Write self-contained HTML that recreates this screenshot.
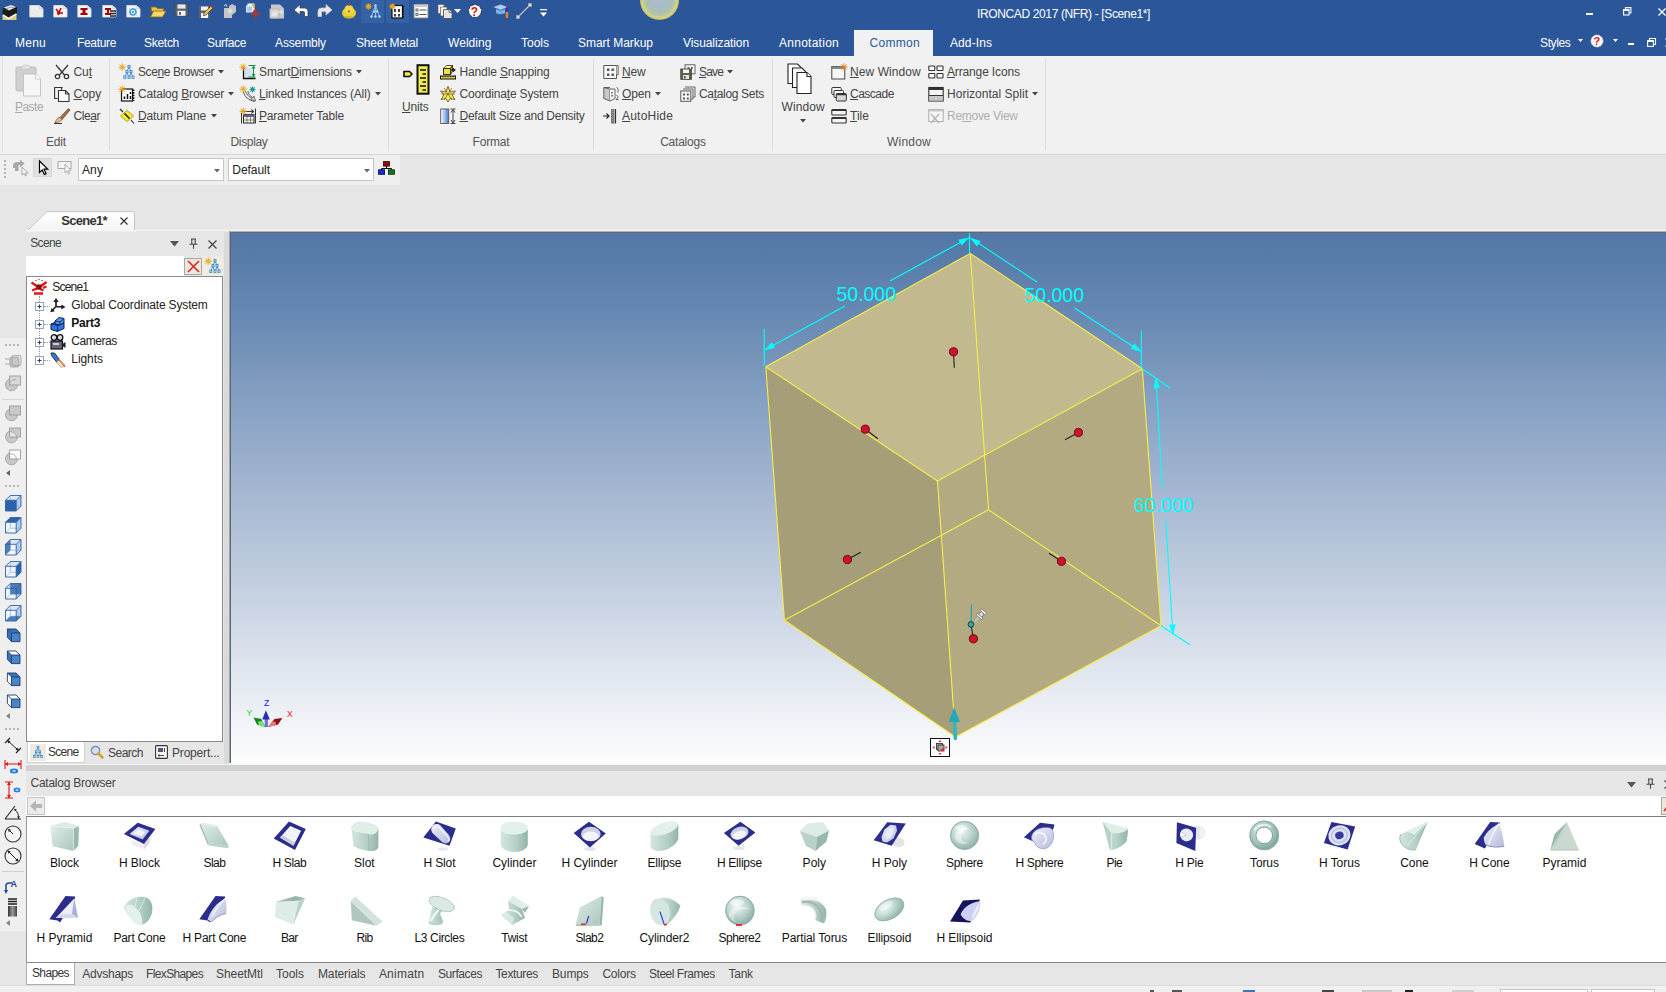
<!DOCTYPE html>
<html lang="en"><head><meta charset="utf-8"><title>IRONCAD 2017 (NFR) - [Scene1*]</title>
<style>
html,body{margin:0;padding:0;}
body{width:1666px;height:992px;overflow:hidden;background:#e6e6e6;font-family:"Liberation Sans",sans-serif;font-size:12px;position:relative;}
.b{position:absolute;display:block;box-sizing:border-box;}
.t{position:absolute;white-space:nowrap;display:block;}
.t u{text-decoration:underline;text-underline-offset:1px;}
svg{overflow:visible;}
</style></head>
<body>
<div class="b" style="left:0px;top:0px;width:1666px;height:56px;background:#2b579a;"></div>
<div class="b" style="left:639.5px;top:-19.5px;width:39.5px;height:39.5px;border-radius:50%;background:radial-gradient(circle closest-side at 50% 50%,#a9bdd9 0%,#a9bdc6 35%,#abc0b0 62%,#bcc8a2 80%,#d4d48c 89%,#d0c860 95%,#beb552 100%);"></div>
<div class="b" style="left:361px;top:0px;width:23px;height:23px;background:#3561a5;"></div>
<div class="b" style="left:385.5px;top:0px;width:23px;height:23px;background:#3561a5;"></div>
<svg class="b" style="left:2px;top:3px;" width="16" height="16" viewBox="0 0 16 16"><rect x="0.500" y="11" width="14" height="6" fill="#d8d078"/><path d="M.5 5.500l9-3 5.500 2v6.500l-8.500 4.500-6-3.500z" fill="#1c1c1c"/><path d="M2 4.500l7-2.500 5 2-7 3.500z" fill="#e8e8e8"/><path d="M4 6l5-2 3 1" stroke="#9a9a9a" stroke-width="1" fill="none"/><path d="M1 12l5.500 3.500 8-4.500" stroke="#f4f4f4" stroke-width="1.600" fill="none"/></svg>
<svg class="b" style="left:29px;top:3px;" width="16" height="16" viewBox="0 0 16 16"><path d="M.8 2.500h9.500l3.700 3.200v8.300h-13.200z" fill="#ececec" stroke="#e4e4e4" stroke-width=".8"/><path d="M10.300 2.500v3.200h3.700z" fill="#fff" stroke="#c4c4c4" stroke-width=".7"/></svg>
<svg class="b" style="left:53px;top:3px;" width="16" height="16" viewBox="0 0 16 16"><path d="M.8 2.500h9.500l3.700 3.200v8.300h-13.200z" fill="#f4f4f4" stroke="#e4e4e4" stroke-width=".8"/><path d="M10.300 2.500v3.200h3.700z" fill="#fff" stroke="#c4c4c4" stroke-width=".7"/><path d="M3 6l4 5M8 5l-3 7M4 10h6" stroke="#c00" stroke-width="1.6" fill="none"/></svg>
<svg class="b" style="left:77px;top:3px;" width="16" height="16" viewBox="0 0 16 16"><path d="M.8 2.500h9.500l3.700 3.200v8.300h-13.200z" fill="#f4f4f4" stroke="#e4e4e4" stroke-width=".8"/><path d="M10.300 2.500v3.200h3.700z" fill="#fff" stroke="#c4c4c4" stroke-width=".7"/><path d="M3.5 5h7v2h-2v3h2v2h-7v-2h2v-3h-2z" fill="#a00"/></svg>
<svg class="b" style="left:101.5px;top:3px;" width="16" height="16" viewBox="0 0 16 16"><path d="M.8 2.500h9.500l3.700 3.200v8.300h-13.200z" fill="#f4f4f4" stroke="#e4e4e4" stroke-width=".8"/><path d="M10.300 2.500v3.200h3.700z" fill="#fff" stroke="#c4c4c4" stroke-width=".7"/><path d="M3 5h6v2h-2v3h2v2h-6v-2h2v-3h-2z" fill="#a00"/><path d="M8 8h6M8 10.5h6M8 13h6" stroke="#222" stroke-width="1.3"/></svg>
<svg class="b" style="left:125.5px;top:3px;" width="16" height="16" viewBox="0 0 16 16"><path d="M.8 2.500h9.500l3.700 3.200v8.300h-13.200z" fill="#f4f4f4" stroke="#e4e4e4" stroke-width=".8"/><path d="M10.300 2.500v3.200h3.700z" fill="#fff" stroke="#c4c4c4" stroke-width=".7"/><circle cx="7" cy="9" r="3" fill="none" stroke="#2a9fd6" stroke-width="1.5"/><circle cx="7" cy="9" r="1" fill="#1a4fb0"/><path d="M3 5l8 8" stroke="#8cf" stroke-width=".8"/></svg>
<svg class="b" style="left:149.5px;top:3px;" width="16" height="16" viewBox="0 0 16 16"><path d="M1 4h5l1.5 1.5h6v3h-12z" fill="#e8c44a" stroke="#8a6a10" stroke-width=".8"/><path d="M0.5 14l3-6h12.5l-3.5 6z" fill="#f4d768" stroke="#8a6a10" stroke-width=".8"/></svg>
<svg class="b" style="left:174px;top:3px;" width="16" height="16" viewBox="0 0 16 16"><rect x="1" y="1" width="13" height="12" fill="#5c6470" stroke="#3c4450" stroke-width=".8"/><rect x="3.500" y="1.400" width="8" height="4.200" fill="#e8e8e8"/><rect x="3.500" y="7.800" width="8" height="5" fill="#f4f4f4"/><rect x="5" y="9" width="2" height="2.800" fill="#5c6470"/></svg>
<svg class="b" style="left:198px;top:3px;" width="16" height="16" viewBox="0 0 16 16"><rect x="1" y="3" width="11" height="12" fill="#5c6470"/><rect x="3" y="3.5" width="7" height="4" fill="#f0f0f0"/><rect x="3" y="10" width="7" height="5" fill="#f8f8f8"/><path d="M6 10l7-7 2 2-7 7-2.6.6z" fill="#f2c44a" stroke="#333" stroke-width=".7"/><path d="M13 3l2 2" stroke="#c33" stroke-width="1.6"/></svg>
<svg class="b" style="left:222px;top:3px;" width="16" height="16" viewBox="0 0 16 16"><path d="M2 5h5v-2l3-2 4 2v6l-4 3v3h-8z" fill="#c4c4c4"/><path d="M5 8l3-3 3 3-3 3z" fill="#dcdcdc"/><path d="M2 3l2-1.5 1 2" stroke="#ddd" fill="none"/></svg>
<svg class="b" style="left:246px;top:3px;" width="16" height="16" viewBox="0 0 16 16"><rect x="2" y="1" width="6" height="6" fill="#e8e8f8" stroke="#fff" stroke-width="1"/><rect x="0.5" y="3" width="6" height="6" fill="#a8c8e8" stroke="#e8f0ff" stroke-width="1"/><path d="M6 2h2v3" stroke="#e8a020" stroke-width="1.4" fill="none"/><path d="M9.5 6v9M5 10.500h9" stroke="#c8301c" stroke-width="1.8"/></svg>
<svg class="b" style="left:269px;top:3px;" width="16" height="16" viewBox="0 0 16 16"><path d="M2 1.500h9l4 4v10h-13z" fill="#c8c8c8"/><rect x="1" y="6" width="9" height="9" fill="#d8d8d8" stroke="#b4b4b4"/><rect x="3" y="9" width="5" height="4" fill="#e4e4e4"/><path d="M9 9h4l-1-2M13 9l-1 2" stroke="#e8e8e8" fill="none" stroke-width="1.2"/></svg>
<svg class="b" style="left:293px;top:3px;" width="16" height="16" viewBox="0 0 16 16"><path d="M1 7l6-5.500v3.500h4.500a3.500 3.500 0 0 1 3.500 3.500v5h-3.500v-4a1 1 0 0 0-1-1h-3.500v3.500z" fill="#fafafa" stroke="#444" stroke-width=".8"/></svg>
<svg class="b" style="left:317px;top:3px;" width="16" height="16" viewBox="0 0 16 16"><path d="M15 7l-6-5.500v3.500h-4.500a3.500 3.500 0 0 0-3.500 3.500v5h3.500v-4a1 1 0 0 1 1-1h3.500v3.500z" fill="#e8e8e8" stroke="#c8c8c8" stroke-width=".8"/></svg>
<svg class="b" style="left:341px;top:3px;" width="16" height="16" viewBox="0 0 16 16"><ellipse cx="8" cy="10" rx="7" ry="5.500" fill="#e8cf30"/><circle cx="8" cy="6.500" r="4.500" fill="#f0da48"/><circle cx="8" cy="1.800" r="1.200" fill="#d03030"/><circle cx="8" cy="8.500" r=".9" fill="#a03060"/><path d="M3 14h10" stroke="#b89c20" stroke-width="1"/></svg>
<svg class="b" style="left:365px;top:3px;" width="16" height="16" viewBox="0 0 16 16"><g stroke="#e8a818" stroke-width="1.300"><path d="M3.500 0.500v6M0.500 3.500h6M1.400 1.400l4.200 4.200M5.600 1.400l-4.200 4.200"/></g><g fill="none" stroke="#9cc4ec" stroke-width=".9"><path d="M10.500 2.500l-4 11M10.500 2.500l4 11M10.500 2.500v11"/><circle cx="10.500" cy="2.500" r="1" fill="#cfe4f8"/><circle cx="9" cy="8.500" r="1" fill="#cfe4f8"/><circle cx="12" cy="8.500" r="1" fill="#cfe4f8"/><circle cx="6.500" cy="13.500" r="1" fill="#cfe4f8"/><circle cx="10.500" cy="13.500" r="1" fill="#cfe4f8"/><circle cx="14.500" cy="13.500" r="1" fill="#cfe4f8"/></g></svg>
<svg class="b" style="left:389px;top:3px;" width="16" height="16" viewBox="0 0 16 16"><rect x="3" y="2.500" width="10.500" height="12.500" fill="#f4f4f4" stroke="#111" stroke-width="1.200"/><path d="M14.200 3v12" stroke="#111" stroke-width="1.600" stroke-dasharray="1.500 1"/><path d="M6 6v3M10 6v3M6 11v2.500M10 11v2.500" stroke="#111" stroke-width="1.600"/><g stroke="#e8a818" stroke-width="1.300"><path d="M3.500 0.500v6M0.500 3.500h6M1.400 1.400l4.200 4.200M5.600 1.400l-4.200 4.200"/></g></svg>
<svg class="b" style="left:413px;top:3px;" width="16" height="16" viewBox="0 0 16 16"><rect x="1" y="1.500" width="14" height="13.500" fill="#fafafa" stroke="#888" stroke-width="1"/><rect x="1" y="1.500" width="14" height="2.500" fill="#ccc"/><rect x="3" y="6" width="2" height="2" fill="none" stroke="#555" stroke-width=".8"/><rect x="3" y="10.500" width="2" height="2" fill="none" stroke="#555" stroke-width=".8"/><path d="M6.500 7h7M6.500 11.500h7" stroke="#555" stroke-width="1"/></svg>
<svg class="b" style="left:437px;top:3px;" width="16" height="16" viewBox="0 0 16 16"><path d="M1 1.500h6v9h-6z" fill="#fafafa" stroke="#666" stroke-width=".8"/><path d="M3.500 4h6.500v9h-6.500z" fill="#fafafa" stroke="#666" stroke-width=".8"/><path d="M6.500 6.500h5.500l3 3v6h-8.500z" fill="#e4e4e4" stroke="#555" stroke-width=".9"/><path d="M12 6.500v3h3" fill="#fff" stroke="#555" stroke-width=".8"/></svg>
<svg class="b" style="left:468px;top:3px;" width="16" height="16" viewBox="0 0 16 16"><circle cx="7" cy="8" r="6.300" fill="#fff" stroke="#222" stroke-width=".8" stroke-dasharray="3 1.200"/><circle cx="7" cy="8" r="5.500" fill="#fff"/></svg>
<svg class="b" style="left:492.5px;top:3px;" width="16" height="16" viewBox="0 0 16 16"><path d="M0.500 4l7-2.500 7 2.500-7 3z" fill="#a8ccf0"/><path d="M3 6v4c2 1.500 7 1.500 9 0v-4l-4.500 1.800z" fill="#7ab0e8"/><rect x="13" y="5" width="1.800" height="4" fill="#1838d8"/><rect x="12.800" y="9" width="2.300" height="6" fill="#f08020"/><circle cx="13.900" cy="4.500" r="1" fill="#c02020"/></svg>
<svg class="b" style="left:516px;top:3px;" width="16" height="16" viewBox="0 0 16 16"><path d="M2 14l12-12" stroke="#c8c8c8" stroke-width="1.100"/><rect x="0.500" y="12.500" width="3" height="3" fill="#ddd" stroke="#aaa" stroke-width=".6"/><rect x="12.500" y="0.500" width="3" height="3" fill="#ddd" stroke="#aaa" stroke-width=".6"/></svg>
<span class="t" style="left:470.8px;top:4.5px;height:14px;line-height:14px;font-size:12px;letter-spacing:0.000px;color:#e01010;font-weight:bold;">?</span>
<svg class="b" style="left:454px;top:9px;" width="8" height="5" viewBox="0 0 8 5"><path d="M0 0h7l-3.500 4z" fill="#fff"/></svg>
<svg class="b" style="left:540px;top:8.5px;" width="8" height="10" viewBox="0 0 8 10"><path d="M0 0h7v1.300h-7z M0 3.500h7l-3.500 4z" fill="#fff"/></svg>
<span class="t" style="left:977.0px;top:5.5px;height:16px;line-height:16px;font-size:12px;letter-spacing:-0.368px;color:#fff;">IRONCAD 2017 (NFR) - [Scene1*]</span>
<div class="b" style="left:1586px;top:13px;width:7px;height:2px;background:#fff;"></div>
<svg class="b" style="left:1623px;top:7px;" width="9" height="9" viewBox="0 0 9 9"><path d="M2.500 2.300v-1.700h5.400v5.400h-1.700" fill="none" stroke="#fff" stroke-width="1.100"/><rect x="0.600" y="2.600" width="5.400" height="5.400" fill="none" stroke="#fff" stroke-width="1.100"/><path d="M0.600 3.300h5.400" stroke="#fff" stroke-width="1.300"/></svg>
<svg class="b" style="left:1658px;top:8px;" width="8" height="8" viewBox="0 0 8 8"><path d="M0.500 0.500l7 7M7.500 0.500l-7 7" stroke="#fff" stroke-width="1.300"/></svg>
<span class="t" style="left:15.0px;top:35.0px;height:16px;line-height:16px;font-size:12px;letter-spacing:0.246px;color:#fff;">Menu</span>
<span class="t" style="left:77.0px;top:35.0px;height:16px;line-height:16px;font-size:12px;letter-spacing:-0.335px;color:#fff;">Feature</span>
<span class="t" style="left:144.0px;top:35.0px;height:16px;line-height:16px;font-size:12px;letter-spacing:-0.279px;color:#fff;">Sketch</span>
<span class="t" style="left:207.0px;top:35.0px;height:16px;line-height:16px;font-size:12px;letter-spacing:-0.335px;color:#fff;">Surface</span>
<span class="t" style="left:275.0px;top:35.0px;height:16px;line-height:16px;font-size:12px;letter-spacing:-0.127px;color:#fff;">Assembly</span>
<span class="t" style="left:356.0px;top:35.0px;height:16px;line-height:16px;font-size:12px;letter-spacing:-0.183px;color:#fff;">Sheet Metal</span>
<span class="t" style="left:448.0px;top:35.0px;height:16px;line-height:16px;font-size:12px;letter-spacing:0.051px;color:#fff;">Welding</span>
<span class="t" style="left:521.0px;top:35.0px;height:16px;line-height:16px;font-size:12px;letter-spacing:-0.003px;color:#fff;">Tools</span>
<span class="t" style="left:578.0px;top:35.0px;height:16px;line-height:16px;font-size:12px;letter-spacing:-0.029px;color:#fff;">Smart Markup</span>
<span class="t" style="left:683.0px;top:35.0px;height:16px;line-height:16px;font-size:12px;letter-spacing:-0.089px;color:#fff;">Visualization</span>
<span class="t" style="left:779.0px;top:35.0px;height:16px;line-height:16px;font-size:12px;letter-spacing:0.264px;color:#fff;">Annotation</span>
<span class="t" style="left:950.0px;top:35.0px;height:16px;line-height:16px;font-size:12px;letter-spacing:0.094px;color:#fff;">Add-Ins</span>
<div class="b" style="left:854px;top:30px;width:79px;height:27px;background:#f1f1f1;"></div>
<span class="t" style="left:869.5px;top:35.0px;height:16px;line-height:16px;font-size:12px;letter-spacing:0.302px;color:#2b579a;">Common</span>
<span class="t" style="left:1540.0px;top:35.0px;height:16px;line-height:16px;font-size:12px;letter-spacing:-0.362px;color:#fff;">Styles</span>
<svg class="b" style="left:1578px;top:39px;" width="6" height="4" viewBox="0 0 6 4"><path d="M0 0h5l-2.500 3z" fill="#fff"/></svg>
<svg class="b" style="left:1590px;top:34px;" width="14" height="14" viewBox="0 0 14 14"><circle cx="7" cy="7" r="6" fill="#fff" stroke="#ddd" stroke-width=".8" stroke-dasharray="2.500 1"/></svg>
<span class="t" style="left:1593.6px;top:35.0px;height:12px;line-height:12px;font-size:11px;letter-spacing:0.000px;color:#e01010;font-weight:bold;">?</span>
<svg class="b" style="left:1613px;top:39px;" width="6" height="4" viewBox="0 0 6 4"><path d="M0 0h5l-2.500 3z" fill="#fff"/></svg>
<div class="b" style="left:1628px;top:43px;width:6px;height:2px;background:#fff;"></div>
<svg class="b" style="left:1647px;top:37.5px;" width="9" height="9" viewBox="0 0 9 9"><path d="M2.500 2.500v-2h6v6h-2" fill="none" stroke="#fff" stroke-width="1.100"/><rect x="0.600" y="2.600" width="5.800" height="5.800" fill="none" stroke="#fff" stroke-width="1.100"/><path d="M0.600 3.300h5.800" stroke="#fff" stroke-width="1.300"/></svg>
<svg class="b" style="left:1664.5px;top:38px;" width="9" height="9" viewBox="0 0 9 9"><path d="M0.500 0.500l8 8M8.500 0.500l-8 8" stroke="#fff" stroke-width="1.200"/></svg>
<div class="b" style="left:0px;top:56px;width:1666px;height:98px;background:#f1f1f1;"></div>
<div class="b" style="left:0px;top:154px;width:1666px;height:1px;background:#d6d6d6;"></div>
<div class="b" style="left:109px;top:59px;width:1px;height:92px;background:#dcdcdc;"></div>
<div class="b" style="left:388px;top:59px;width:1px;height:92px;background:#dcdcdc;"></div>
<div class="b" style="left:593px;top:59px;width:1px;height:92px;background:#dcdcdc;"></div>
<div class="b" style="left:772px;top:59px;width:1px;height:92px;background:#dcdcdc;"></div>
<div class="b" style="left:1045px;top:59px;width:1px;height:92px;background:#dcdcdc;"></div>
<div class="b" style="left:2px;top:56px;width:1px;height:96px;background:#e2e2e2;"></div>
<svg class="b" style="left:15px;top:64px;" width="28" height="34" viewBox="0 0 28 34"><rect x="1" y="3" width="20" height="24" rx="1.500" fill="#d0d0d0" stroke="#bcbcbc"/><path d="M7 3.500c0-3 8-3 8 0l1.500 1.500h-11z" fill="#e8e8e8" stroke="#c4c4c4" stroke-width=".8"/><path d="M8.500 10h12l5 5v17h-17z" fill="#f6f6f6" stroke="#c2c2c2" stroke-width="1"/><path d="M20.500 10v5h5" fill="#fff" stroke="#c2c2c2" stroke-width=".8"/></svg>
<span class="t" style="left:15.0px;top:99.0px;height:16px;line-height:16px;font-size:12px;letter-spacing:-0.534px;color:#a8a8a8;"><u>P</u>aste</span>
<svg class="b" style="left:54px;top:64px;" width="16" height="16" viewBox="0 0 16 16"><path d="M2 1l8.500 10M14 1l-8.500 10" stroke="#333" stroke-width="1.200"/><circle cx="3.500" cy="12.500" r="2.200" fill="none" stroke="#333" stroke-width="1.200"/><circle cx="12.500" cy="12.500" r="2.200" fill="none" stroke="#333" stroke-width="1.200"/></svg>
<span class="t" style="left:73.5px;top:64.0px;height:16px;line-height:16px;font-size:12px;letter-spacing:-0.057px;color:#444;">Cu<u>t</u></span>
<svg class="b" style="left:54px;top:86px;" width="16" height="16" viewBox="0 0 16 16"><path d="M.600 1.500h6l2 0v0M.600 1.500v11h3" fill="none" stroke="#333" stroke-width="1.100"/><path d="M.600 1.500h7v3" fill="none" stroke="#333" stroke-width="1.100"/><path d="M4.500 4.500h7l3.500 3.500v7.500h-10.500z" fill="#fafafa" stroke="#333" stroke-width="1.100"/><path d="M11.500 4.500v3.500h3.500" fill="none" stroke="#333" stroke-width="1"/></svg>
<span class="t" style="left:73.5px;top:86.0px;height:16px;line-height:16px;font-size:12px;letter-spacing:-0.129px;color:#444;"><u>C</u>opy</span>
<svg class="b" style="left:54px;top:108px;" width="16" height="16" viewBox="0 0 16 16"><path d="M14.500 .5l-8.500 9 2 2 8-9.500z" fill="#b07040" stroke="#333" stroke-width=".7"/><path d="M6 9.500c-2 0-3.500 2-5 5 3 0 6-1 7-3z" fill="#e8c080" stroke="#844" stroke-width=".7"/><path d="M0 15.500h8" stroke="#333" stroke-width="1"/></svg>
<span class="t" style="left:73.5px;top:108.0px;height:16px;line-height:16px;font-size:12px;letter-spacing:-0.438px;color:#444;">Cle<u>a</u>r</span>
<span class="t" style="left:46.0px;top:133.5px;height:16px;line-height:16px;font-size:12px;letter-spacing:-0.168px;color:#555;">Edit</span>
<svg class="b" style="left:119px;top:64px;" width="16" height="16" viewBox="0 0 16 16"><g stroke="#eaa210" stroke-width="1"><path d="M3.200 -.5v7.400M-.5 3.200h7.400M.6 .6l5.200 5.200M5.800 .6l-5.200 5.200"/></g><g fill="#eaf3fc" stroke="#3f86cc" stroke-width=".9"><path d="M10 3.500l-1.800 3M10 3.500l1.800 3M8 8.500l-2.200 4M8 8.500l1.500 4M12 8.500l1.800 4M12 8.500l-1.500 4" fill="none"/><rect x="9" y="1.500" width="2" height="2.200"/><rect x="7" y="6.500" width="2" height="2.200"/><rect x="11" y="6.500" width="2" height="2.200"/><rect x="4.800" y="12" width="2" height="2.400"/><rect x="9" y="12" width="2" height="2.400"/><rect x="13" y="12" width="2" height="2.400"/></g></svg>
<span class="t" style="left:138.0px;top:64.0px;height:16px;line-height:16px;font-size:12px;letter-spacing:-0.412px;color:#444;">Sce<u>n</u>e Browser</span>
<svg class="b" style="left:218px;top:70px;" width="6" height="4" viewBox="0 0 6 4"><path d="M0 0h6l-3 3.500z" fill="#444"/></svg>
<svg class="b" style="left:119px;top:86px;" width="16" height="16" viewBox="0 0 16 16"><rect x="2.500" y="3" width="11" height="12" fill="#fafafa" stroke="#111" stroke-width="1.200"/><path d="M14.500 3.500v11.500" stroke="#111" stroke-width="1.800" stroke-dasharray="1.600 1"/><path d="M5.500 10.500v2.500M8.500 8v5M11.500 6v2M11.500 10v3" stroke="#111" stroke-width="1.500"/><g stroke="#eaa210" stroke-width="1"><path d="M3.200 -.5v7.400M-.5 3.200h7.400M.6 .6l5.200 5.200M5.800 .6l-5.200 5.200"/></g></svg>
<span class="t" style="left:138.0px;top:86.0px;height:16px;line-height:16px;font-size:12px;letter-spacing:-0.180px;color:#444;">Catalog <u>B</u>rowser</span>
<svg class="b" style="left:228px;top:92px;" width="6" height="4" viewBox="0 0 6 4"><path d="M0 0h6l-3 3.500z" fill="#444"/></svg>
<svg class="b" style="left:119px;top:108px;" width="16" height="16" viewBox="0 0 16 16"><path d="M8 2.500l6.500 5.500-6.500 5.500-6.500-5.500z" fill="#f4e838" stroke="#b8a800" stroke-width="1"/><path d="M1 1l3 3M12 12l3 3.500" stroke="#222" stroke-width="1.100"/><path d="M5.500 5.500l5 5" stroke="#222" stroke-width="1.600"/></svg>
<span class="t" style="left:138.0px;top:108.0px;height:16px;line-height:16px;font-size:12px;letter-spacing:-0.124px;color:#444;"><u>D</u>atum Plane</span>
<svg class="b" style="left:210.5px;top:114px;" width="6" height="4" viewBox="0 0 6 4"><path d="M0 0h6l-3 3.500z" fill="#444"/></svg>
<svg class="b" style="left:240px;top:64px;" width="16" height="16" viewBox="0 0 16 16"><rect x="3.500" y="4" width="8" height="9.500" fill="#d4e0f8"/><path d="M3.500 3v11.500h12" fill="none" stroke="#111" stroke-width="1.300"/><path d="M13.500 2.500v10M8.500 1.500h7M8.500 13h7" stroke="#109040" stroke-width="1"/><path d="M13.500 1.500l-2 3h4zM13.500 13l-2-3h4z" fill="#109040"/><g stroke="#eaa210" stroke-width="1"><path d="M3.200 -.5v7.400M-.5 3.200h7.400M.6 .6l5.200 5.200M5.800 .6l-5.200 5.200"/></g></svg>
<span class="t" style="left:259.0px;top:64.0px;height:16px;line-height:16px;font-size:12px;letter-spacing:-0.114px;color:#444;">Smart<u>D</u>imensions</span>
<svg class="b" style="left:356px;top:70px;" width="6" height="4" viewBox="0 0 6 4"><path d="M0 0h6l-3 3.500z" fill="#444"/></svg>
<svg class="b" style="left:240px;top:86px;" width="16" height="16" viewBox="0 0 16 16"><g stroke="#eaa210" stroke-width="1"><path d="M3.200 -.5v7.400M-.5 3.200h7.400M.6 .6l5.200 5.200M5.800 .6l-5.200 5.200"/></g><path d="M3.500 6c1 5 5 8 11 9.500M5.500 5c1 4 5 7.500 10 9M8 5c0 3 3 6 6 7" fill="none" stroke="#555" stroke-width="1"/><path d="M14 10l1.500 5-5-1z" fill="#ccc" stroke="#555" stroke-width=".7"/><g stroke="#10a090" stroke-width="1.100"><path d="M12.500 .5v6M9.500 3.500h6M10.400 1.400l4.200 4.200M14.600 1.400l-4.200 4.200"/></g></svg>
<span class="t" style="left:259.0px;top:86.0px;height:16px;line-height:16px;font-size:12px;letter-spacing:-0.146px;color:#444;"><u>L</u>inked Instances (All)</span>
<svg class="b" style="left:375px;top:92px;" width="6" height="4" viewBox="0 0 6 4"><path d="M0 0h6l-3 3.500z" fill="#444"/></svg>
<svg class="b" style="left:240px;top:108px;" width="16" height="16" viewBox="0 0 16 16"><path d="M1.500 5v10.500M15.500 .5v15M1.500 3.500h12M11 1.500l3 2-3 2" fill="none" stroke="#222" stroke-width=".9"/><rect x="3.500" y="6.500" width="10.500" height="8.500" fill="#fff" stroke="#222" stroke-width="1"/><rect x="3.500" y="6.500" width="10.500" height="2.500" fill="#668"/><path d="M3.500 12h10.500M7 9v6M10.500 9v6" stroke="#664" stroke-width=".8"/><g stroke="#eaa210" stroke-width="1"><path d="M3.200 -.5v7.400M-.5 3.200h7.400M.6 .6l5.200 5.200M5.800 .6l-5.200 5.200"/></g></svg>
<span class="t" style="left:259.0px;top:108.0px;height:16px;line-height:16px;font-size:12px;letter-spacing:-0.188px;color:#444;"><u>P</u>arameter Table</span>
<span class="t" style="left:230.5px;top:133.5px;height:16px;line-height:16px;font-size:12px;letter-spacing:-0.337px;color:#555;">Display</span>
<svg class="b" style="left:403.4px;top:64px;" width="28" height="31" viewBox="0 0 28 31"><path d="M1 7.500h5.500l2.500 2.500-2.500 2.500h-5.500z" fill="#f0ec50" stroke="#111" stroke-width="1.600"/><rect x="14.500" y="1.200" width="11" height="28.500" fill="#f0ec50" stroke="#111" stroke-width="2"/><path d="M17 6h6M19.500 10h3.500M17 14h6M19.500 18h3.500M17 22h6M19.500 26h3.500" stroke="#111" stroke-width="1.500"/></svg>
<span class="t" style="left:402.0px;top:99.0px;height:16px;line-height:16px;font-size:12px;letter-spacing:-0.169px;color:#444;"><u>U</u>nits</span>
<svg class="b" style="left:440px;top:64px;" width="16" height="16" viewBox="0 0 16 16"><path d="M3.500 4.500l3-3h6l-2 3z" fill="#fff8a0" stroke="#222" stroke-width=".8"/><rect x="3.500" y="4.500" width="7" height="6" fill="#f0e040" stroke="#222" stroke-width=".9"/><path d="M10.500 4.500l2-3v6l-2 3z" fill="#b8a820" stroke="#222" stroke-width=".8"/><path d="M11 6h3M13 4.500l2 1.500-2 1.500" fill="none" stroke="#111" stroke-width="1.100"/><rect x=".5" y="12" width="15" height="3" fill="#f0e040" stroke="#111" stroke-width="1"/><path d="M3 12v1.500M5.500 12v1.500M8 12v1.500M10.500 12v1.500M13 12v1.500" stroke="#111" stroke-width=".7"/></svg>
<span class="t" style="left:459.5px;top:64.0px;height:16px;line-height:16px;font-size:12px;letter-spacing:-0.138px;color:#444;">Handle <u>S</u>napping</span>
<svg class="b" style="left:440px;top:86px;" width="16" height="16" viewBox="0 0 16 16"><path d="M8 .5l2.200 5.500 5.300-1-3.500 3.800 3 4.700-5-1-2 3.500-2-3.500-5 1 3-4.700-3.500-3.800 5.300 1z" fill="#f8e860" stroke="#6a5a20" stroke-width=".9"/><path d="M4 2l8 12M12 2l-8 12M1 8h14" stroke="#6a5a20" stroke-width=".7" fill="none"/></svg>
<span class="t" style="left:459.5px;top:86.0px;height:16px;line-height:16px;font-size:12px;letter-spacing:-0.178px;color:#444;">Coordina<u>t</u>e System</span>
<svg class="b" style="left:440px;top:108px;" width="16" height="16" viewBox="0 0 16 16"><defs><linearGradient id="dsg" x1="0" x2="1"><stop offset="0" stop-color="#fff"/><stop offset="1" stop-color="#4878d0"/></linearGradient></defs><rect x=".7" y="1" width="8" height="14.500" fill="url(#dsg)" stroke="#555" stroke-width=".9"/><path d="M13 2v12.500M10.500 1h5M10.500 15.500h5M13 1.500l-2 3M13 1.500l2 3M13 15l-2-3M13 15l2-3" fill="none" stroke="#333" stroke-width=".9"/></svg>
<span class="t" style="left:459.5px;top:108.0px;height:16px;line-height:16px;font-size:12px;letter-spacing:-0.266px;color:#444;"><u>D</u>efault Size and Density</span>
<span class="t" style="left:472.5px;top:133.5px;height:16px;line-height:16px;font-size:12px;letter-spacing:-0.167px;color:#555;">Format</span>
<svg class="b" style="left:603px;top:64px;" width="16" height="16" viewBox="0 0 16 16"><path d="M.8 1.500h12.700v13h-12.700z" fill="#fafafa" stroke="#555" stroke-width="1"/><path d="M13.500 1.500h1.700v9h-1.700" fill="#ddd" stroke="#555" stroke-width=".8"/><path d="M4 4.500h2.400v2.400h-2.400zM8.500 4.500h2.400v2.400h-2.400zM4 9.500h2.400v2.400h-2.400zM8.500 9.500h2.400v2.400h-2.400z" fill="#555"/></svg>
<span class="t" style="left:622.0px;top:64.0px;height:16px;line-height:16px;font-size:12px;letter-spacing:-0.172px;color:#444;"><u>N</u>ew</span>
<svg class="b" style="left:603px;top:86px;" width="16" height="16" viewBox="0 0 16 16"><path d="M.8 1.500l6 1.500v12l-6-2.500z" fill="#c8c8c8" stroke="#555" stroke-width=".9"/><path d="M6.800 3h5.200v9.500l-5.200 2.500" fill="#f4f4f4" stroke="#555" stroke-width=".9"/><path d="M1 1.500h6" stroke="#555" stroke-width=".9"/><path d="M9 6v1.500M9 9v1.500" stroke="#444" stroke-width="1.300"/><path d="M13.500 9.500c1.500 0 2 1.500 1 2.500l-1.500 1.500h2.500" fill="none" stroke="#555" stroke-width=".9"/><path d="M13.500 1.500l1.500 1v4" fill="none" stroke="#555" stroke-width=".8"/></svg>
<span class="t" style="left:622.0px;top:86.0px;height:16px;line-height:16px;font-size:12px;letter-spacing:-0.161px;color:#444;"><u>O</u>pen</span>
<svg class="b" style="left:655px;top:92px;" width="6" height="4" viewBox="0 0 6 4"><path d="M0 0h6l-3 3.500z" fill="#444"/></svg>
<svg class="b" style="left:603px;top:108px;" width="16" height="16" viewBox="0 0 16 16"><path d="M0 8h5.500M3.500 5.500l2.500 2.500-2.500 2.500" fill="none" stroke="#222" stroke-width="1.100"/><rect x="8" y="1" width="3.400" height="14.500" fill="#777"/><path d="M12.500 1v14.500" stroke="#333" stroke-width="1.200"/><path d="M9.700 2v12" stroke="#bbb" stroke-width=".8" stroke-dasharray="1 1"/></svg>
<span class="t" style="left:622.0px;top:108.0px;height:16px;line-height:16px;font-size:12px;letter-spacing:0.205px;color:#444;"><u>A</u>utoHide</span>
<svg class="b" style="left:680px;top:64px;" width="16" height="16" viewBox="0 0 16 16"><rect x="5" y=".8" width="10" height="9" fill="#f4f4f4" stroke="#555" stroke-width=".9"/><path d="M7.500 3h1.800v1.800h-1.800zM11 3h1.800v1.800h-1.800z" fill="#555"/><rect x=".8" y="5" width="10.500" height="10.300" fill="#5c6444" stroke="#333" stroke-width=".8"/><rect x="3" y="5.500" width="6" height="3.500" fill="#f4f4f4"/><rect x="3" y="11" width="6" height="4" fill="#e0e0e0"/><rect x="4" y="12" width="1.500" height="2.500" fill="#444"/></svg>
<span class="t" style="left:699.0px;top:64.0px;height:16px;line-height:16px;font-size:12px;letter-spacing:-0.836px;color:#444;"><u>S</u>ave</span>
<svg class="b" style="left:727px;top:70px;" width="6" height="4" viewBox="0 0 6 4"><path d="M0 0h6l-3 3.500z" fill="#444"/></svg>
<svg class="b" style="left:680px;top:86px;" width="16" height="16" viewBox="0 0 16 16"><path d="M5 1h10v10h-2" fill="#eee" stroke="#555" stroke-width=".9"/><path d="M3 3h10v10h-2" fill="#eee" stroke="#555" stroke-width=".9"/><rect x=".8" y="5" width="10" height="10.300" fill="#fafafa" stroke="#555" stroke-width="1"/><path d="M3 7.500h2v2h-2zM6.800 7.500h2v2h-2zM3 11.500h2v2h-2zM6.800 11.500h2v2h-2z" fill="#555"/></svg>
<span class="t" style="left:699.0px;top:86.0px;height:16px;line-height:16px;font-size:12px;letter-spacing:-0.324px;color:#444;">Ca<u>t</u>alog Sets</span>
<span class="t" style="left:660.2px;top:133.5px;height:16px;line-height:16px;font-size:12px;letter-spacing:-0.232px;color:#555;">Catalogs</span>
<svg class="b" style="left:787px;top:63px;" width="29" height="32" viewBox="0 0 29 32"><g fill="#fff" stroke="#222" stroke-width="1.100"><path d="M1 1h9.500l3.500 3.500v16h-13z"/><path d="M5.500 5h9.500l3.500 3.500v16h-13z"/><path d="M10 9.500h10l4 4v17h-14z"/><path d="M20 9.500v4h4" /></g></svg>
<span class="t" style="left:781.5px;top:99.0px;height:16px;line-height:16px;font-size:12px;letter-spacing:0.085px;color:#444;">Window</span>
<svg class="b" style="left:799.5px;top:119px;" width="6" height="4" viewBox="0 0 6 4"><path d="M0 0h6l-3 3.500z" fill="#444"/></svg>
<svg class="b" style="left:831px;top:64px;" width="16" height="16" viewBox="0 0 16 16"><rect x=".8" y="2.500" width="13" height="12.500" fill="#f6f6f6" stroke="#444" stroke-width="1"/><rect x=".8" y="2.500" width="13" height="2.500" fill="#888"/><g stroke="#f08010" stroke-width=".9"><path d="M13 -.7v7.400M9.300 3h7.400M10.400 .4l5.200 5.200M15.600 .4l-5.200 5.200"/></g></svg>
<span class="t" style="left:850.0px;top:64.0px;height:16px;line-height:16px;font-size:12px;letter-spacing:0.077px;color:#444;"><u>N</u>ew Window</span>
<svg class="b" style="left:831px;top:86px;" width="16" height="16" viewBox="0 0 16 16"><rect x=".8" y="1.500" width="9.500" height="7" rx="1" fill="#f4f4f4" stroke="#333" stroke-width="1"/><rect x="3" y="4.500" width="9.500" height="7" rx="1" fill="#f4f4f4" stroke="#333" stroke-width="1"/><rect x="5.300" y="7.500" width="10" height="7.500" rx="1" fill="#d8d8d8" stroke="#333" stroke-width="1"/><path d="M5.300 8.500h10" stroke="#333" stroke-width="1.500"/></svg>
<span class="t" style="left:850.0px;top:86.0px;height:16px;line-height:16px;font-size:12px;letter-spacing:-0.508px;color:#444;"><u>C</u>ascade</span>
<svg class="b" style="left:831px;top:108px;" width="16" height="16" viewBox="0 0 16 16"><rect x=".8" y="1.500" width="14.400" height="5.500" rx="1" fill="#f4f4f4" stroke="#333" stroke-width="1.100"/><rect x=".8" y="9.500" width="14.400" height="5.500" rx="1" fill="#f4f4f4" stroke="#333" stroke-width="1.100"/><path d="M.8 2.300h14.400M.8 10.300h14.400" stroke="#333" stroke-width="1.600"/></svg>
<span class="t" style="left:850.0px;top:108.0px;height:16px;line-height:16px;font-size:12px;letter-spacing:0.023px;color:#444;"><u>T</u>ile</span>
<svg class="b" style="left:928px;top:64px;" width="16" height="16" viewBox="0 0 16 16"><g fill="#f8f8f8" stroke="#333" stroke-width="1.100"><rect x=".8" y="2" width="6" height="4.500" rx=".8"/><rect x="9" y="2" width="6" height="4.500" rx=".8"/><rect x=".8" y="9.500" width="6" height="4.500" rx=".8"/><rect x="9" y="9.500" width="6" height="4.500" rx=".8"/></g></svg>
<span class="t" style="left:947.0px;top:64.0px;height:16px;line-height:16px;font-size:12px;letter-spacing:-0.145px;color:#444;"><u>A</u>rrange Icons</span>
<svg class="b" style="left:928px;top:86px;" width="16" height="16" viewBox="0 0 16 16"><rect x=".8" y="1.500" width="14.400" height="13.500" fill="#f4f4f4" stroke="#333" stroke-width="1.100"/><rect x=".8" y="1.500" width="14.400" height="2.500" fill="#333"/><rect x="1.300" y="10" width="13.400" height="4.500" fill="#c8c8c8"/><path d="M.8 9.500h14.400" stroke="#333" stroke-width="1"/></svg>
<span class="t" style="left:947.0px;top:86.0px;height:16px;line-height:16px;font-size:12px;letter-spacing:0.019px;color:#444;">Horizontal Split</span>
<svg class="b" style="left:1032px;top:92px;" width="6" height="4" viewBox="0 0 6 4"><path d="M0 0h6l-3 3.500z" fill="#444"/></svg>
<svg class="b" style="left:928px;top:108px;" width="16" height="16" viewBox="0 0 16 16"><rect x=".8" y="1.500" width="14.400" height="12" fill="#f6f6f6" stroke="#b0b0b0" stroke-width="1"/><rect x=".8" y="1.500" width="14.400" height="2" fill="#c4c4c4"/><path d="M3 6l8 9M11 6l-8 9" stroke="#b8b8b8" stroke-width="1.500"/></svg>
<span class="t" style="left:947.0px;top:108.0px;height:16px;line-height:16px;font-size:12px;letter-spacing:-0.283px;color:#aeaeae;">Re<u>m</u>ove View</span>
<span class="t" style="left:887.0px;top:133.5px;height:16px;line-height:16px;font-size:12px;letter-spacing:0.219px;color:#555;">Window</span>
<div class="b" style="left:0px;top:155px;width:400px;height:30px;background:#efefef;"></div>
<div class="b" style="left:4px;top:160px;width:2px;height:2px;background:#b4b4b4;"></div>
<div class="b" style="left:4px;top:164px;width:2px;height:2px;background:#b4b4b4;"></div>
<div class="b" style="left:4px;top:168px;width:2px;height:2px;background:#b4b4b4;"></div>
<div class="b" style="left:4px;top:172px;width:2px;height:2px;background:#b4b4b4;"></div>
<div class="b" style="left:4px;top:176px;width:2px;height:2px;background:#b4b4b4;"></div>
<svg class="b" style="left:12px;top:159px;" width="18" height="17" viewBox="0 0 18 17"><path d="M1 7c0-3 2-4 5-4h2v-2.500l4.500 4-4.500 4v-2.500h-1.500v6h-3.500v-3h-2z" fill="#a8a8a8"/><path d="M10 8v8l2-1.500 1.500 2.500 1-.5-1.200-2.500h3z" fill="#f4f4f4" stroke="#a0a0a0" stroke-width=".9"/></svg>
<div class="b" style="left:33px;top:158px;width:19px;height:19px;background:#e0e0e0;border:1px solid #d6d6d6;"></div>
<svg class="b" style="left:38px;top:160px;" width="12" height="16" viewBox="0 0 12 16"><path d="M1.500 1v11.500l2.800-2.500 2 4.500 1.800-.8-2-4.500h3.600z" fill="#fff" stroke="#000" stroke-width="1.200"/></svg>
<svg class="b" style="left:57px;top:160px;" width="16" height="15" viewBox="0 0 16 15"><rect x="1" y="1.500" width="13" height="7" fill="#f4f4f4" stroke="#a8a8a8" stroke-width="1"/><path d="M8 4v9l2-1.800 1.500 3 1-.5-1.300-3h2.800z" fill="#fafafa" stroke="#a8a8a8" stroke-width=".9"/></svg>
<div class="b" style="left:78px;top:158px;width:146px;height:23px;background:#fff;border:1px solid #c6c6c6;"></div>
<span class="t" style="left:82.0px;top:161.5px;height:16px;line-height:16px;font-size:12px;letter-spacing:0.109px;color:#222;">Any</span>
<svg class="b" style="left:213.5px;top:169px;" width="6" height="4" viewBox="0 0 6 4"><path d="M0 0h6l-3 3.500z" fill="#666"/></svg>
<div class="b" style="left:228px;top:158px;width:146px;height:23px;background:#fff;border:1px solid #c6c6c6;"></div>
<span class="t" style="left:232.3px;top:161.5px;height:16px;line-height:16px;font-size:12px;letter-spacing:-0.059px;color:#222;">Default</span>
<svg class="b" style="left:363.5px;top:169px;" width="6" height="4" viewBox="0 0 6 4"><path d="M0 0h6l-3 3.500z" fill="#666"/></svg>
<svg class="b" style="left:377.5px;top:160.5px;" width="17" height="14" viewBox="0 0 17 14"><path d="M8.500 5v2.500M3.500 10v-2.500h10v2.500" fill="none" stroke="#111" stroke-width="1"/><rect x="5.500" y=".6" width="6" height="4.500" fill="#8c1010" stroke="#300" stroke-width=".8"/><rect x=".6" y="8.800" width="6" height="4.500" fill="#1030e0" stroke="#003" stroke-width=".8"/><rect x="10.400" y="8.800" width="6" height="4.500" fill="#107820" stroke="#030" stroke-width=".8"/></svg>
<div class="b" style="left:134px;top:229px;width:1532px;height:1px;background:#ececec;"></div>
<div class="b" style="left:134px;top:230px;width:1532px;height:1px;background:#f0f0f0;"></div>
<svg class="b" style="left:26px;top:211px;" width="110" height="20" viewBox="0 0 110 20"><defs><linearGradient id="tg" x1="0" x2="0" y1="0" y2="1"><stop offset="0" stop-color="#fff"/><stop offset="1" stop-color="#f4f4f4"/></linearGradient></defs><path d="M1.500 19.500L21 .6h85.500q2 0 2 2v17z" fill="url(#tg)" stroke="#c4c4c4" stroke-width="1"/><path d="M0 19.800h110" stroke="#f8f8f8" stroke-width="1.500"/></svg>
<span class="t" style="left:61.2px;top:212.6px;height:16px;line-height:16px;font-size:13px;letter-spacing:-0.701px;color:#333;font-weight:bold;">Scene1*</span>
<svg class="b" style="left:120px;top:217px;" width="8" height="8" viewBox="0 0 8 8"><path d="M.5 .5l7 7M7.500 .5l-7 7" stroke="#333" stroke-width="1.200"/></svg>
<div class="b" style="left:26px;top:232px;width:198px;height:532px;background:#e6e6e6;"></div>
<span class="t" style="left:30.2px;top:235.3px;height:16px;line-height:16px;font-size:12px;letter-spacing:-0.643px;color:#444;">Scene</span>
<svg class="b" style="left:170px;top:241px;" width="9" height="6" viewBox="0 0 9 6"><path d="M0 0h9l-4.500 5.500z" fill="#555"/></svg>
<svg class="b" style="left:189px;top:238px;" width="9" height="11" viewBox="0 0 9 11"><path d="M2 1h5M2.800 1v5M6.200 1v5M.5 6.200h8M4.500 6.200v4.500" stroke="#444" stroke-width="1.100" fill="none"/></svg>
<svg class="b" style="left:207.5px;top:239.5px;" width="9" height="9" viewBox="0 0 9 9"><path d="M.5 .5l8 8M8.500 .5l-8 8" stroke="#444" stroke-width="1.200"/></svg>
<div class="b" style="left:26px;top:256px;width:158px;height:20px;background:#fff;"></div>
<div class="b" style="left:202px;top:256px;width:21px;height:20px;background:#efece2;"></div>
<div class="b" style="left:184px;top:257.5px;width:18px;height:17.5px;background:#ece7da;border:1px solid #a8a8a8;"></div>
<svg class="b" style="left:186.5px;top:259.5px;" width="13" height="13" viewBox="0 0 13 13"><path d="M1 1l11 11M12 1l-11 11" stroke="#e02020" stroke-width="1.500"/></svg>
<svg class="b" style="left:205px;top:258px;" width="16" height="16" viewBox="0 0 16 16"><g stroke="#eaa210" stroke-width="1"><path d="M3.200 -.5v7.400M-.5 3.200h7.400M.6 .6l5.200 5.200M5.800 .6l-5.200 5.200"/></g><g fill="#eaf3fc" stroke="#3f86cc" stroke-width=".9"><path d="M10 3.500l-1.800 3M10 3.500l1.800 3M8 8.500l-2.200 4M8 8.500l1.500 4M12 8.500l1.800 4M12 8.500l-1.500 4" fill="none"/><rect x="9" y="1.500" width="2" height="2.200"/><rect x="7" y="6.500" width="2" height="2.200"/><rect x="11" y="6.500" width="2" height="2.200"/><rect x="4.800" y="12" width="2" height="2.400"/><rect x="9" y="12" width="2" height="2.400"/><rect x="13" y="12" width="2" height="2.400"/></g></svg>
<div class="b" style="left:26px;top:276px;width:197px;height:465px;background:#fff;border:1px solid #8a8a8a;border-bottom:none;"></div>
<svg class="b" style="left:30px;top:279px;" width="18" height="17" viewBox="0 0 18 17"><path d="M6,1v1M9,0v1M12,1v1" stroke="#222" stroke-width="1"/><path d="M1.500,3.500l6,4M16.500,3l-6,4.500M2,11.500l6,-2.500 5.500,2.500M4,14.500h9" stroke="#e01818" stroke-width="2.400" fill="none"/><path d="M13,9l3.500,-1.500" stroke="#e01818" stroke-width="2.200"/><rect x="6.500" y="5.500" width="5" height="5" fill="#8c1010"/></svg>
<span class="t" style="left:52.2px;top:279.0px;height:16px;line-height:16px;font-size:12px;letter-spacing:-0.781px;color:#222;">Scene1</span>
<div class="b" style="left:39px;top:296px;width:1px;height:60px;border-left:1px dotted #9a9a9a;"></div>
<div class="b" style="left:44px;top:306px;width:6px;height:1px;border-top:1px dotted #9a9a9a;"></div>
<svg class="b" style="left:34.5px;top:301.5px;" width="9" height="9" viewBox="0 0 9 9"><rect x=".5" y=".5" width="8" height="8" fill="#fff" stroke="#98a4b8" stroke-width="1"/><path d="M2.500 4.500h4M4.500 2.500v4" stroke="#2a3c6c" stroke-width="1"/></svg>
<div class="b" style="left:44px;top:324px;width:6px;height:1px;border-top:1px dotted #9a9a9a;"></div>
<svg class="b" style="left:34.5px;top:319.5px;" width="9" height="9" viewBox="0 0 9 9"><rect x=".5" y=".5" width="8" height="8" fill="#fff" stroke="#98a4b8" stroke-width="1"/><path d="M2.500 4.500h4M4.500 2.500v4" stroke="#2a3c6c" stroke-width="1"/></svg>
<div class="b" style="left:44px;top:342px;width:6px;height:1px;border-top:1px dotted #9a9a9a;"></div>
<svg class="b" style="left:34.5px;top:337.5px;" width="9" height="9" viewBox="0 0 9 9"><rect x=".5" y=".5" width="8" height="8" fill="#fff" stroke="#98a4b8" stroke-width="1"/><path d="M2.500 4.500h4M4.500 2.500v4" stroke="#2a3c6c" stroke-width="1"/></svg>
<div class="b" style="left:44px;top:360px;width:6px;height:1px;border-top:1px dotted #9a9a9a;"></div>
<svg class="b" style="left:34.5px;top:355.5px;" width="9" height="9" viewBox="0 0 9 9"><rect x=".5" y=".5" width="8" height="8" fill="#fff" stroke="#98a4b8" stroke-width="1"/><path d="M2.500 4.500h4M4.500 2.500v4" stroke="#2a3c6c" stroke-width="1"/></svg>
<svg class="b" style="left:50px;top:297.5px;" width="16" height="16" viewBox="0 0 16 16"><path d="M6,8.500v-6M6,8.500l7,.4M6,8.500l-4,4" stroke="#222" stroke-width="1.700" fill="none"/><path d="M6,0l-2.800,4h5.600zM15.500,9l-4,-2.600-.3,5zM.3,14.300l4.600,-1-3.400,-3.400z" fill="#222"/></svg>
<span class="t" style="left:71.3px;top:297.0px;height:16px;line-height:16px;font-size:12px;letter-spacing:-0.152px;color:#222;">Global Coordinate System</span>
<svg class="b" style="left:50px;top:316px;" width="16" height="16" viewBox="0 0 16 16"><path d="M1 8l6-2.500 7 1v6l-6.500 3-6.500-2z" fill="#2a78e0" stroke="#0a1a50" stroke-width="1"/><path d="M1 8l6.500 1.500 6.500-3M7.500 9.500v6" stroke="#0a1a50" stroke-width=".9" fill="none"/><path d="M5 5l4-3.500 5 1v4l-4 2.500-5-1z" fill="#4a98f0" stroke="#0a1a50" stroke-width="1"/><path d="M5 5l5 1 4-3.500M10 6v3" stroke="#0a1a50" stroke-width=".8" fill="none"/></svg>
<span class="t" style="left:71.3px;top:315.2px;height:16px;line-height:16px;font-size:12px;letter-spacing:-0.203px;color:#111;font-weight:bold;">Part3</span>
<svg class="b" style="left:50px;top:334px;" width="16" height="16" viewBox="0 0 16 16"><circle cx="4" cy="3.500" r="2.800" fill="#ddd" stroke="#111" stroke-width="1.300"/><circle cx="10" cy="3.500" r="2.800" fill="#ddd" stroke="#111" stroke-width="1.300"/><rect x="1" y="7" width="11.500" height="8" fill="#667" stroke="#111" stroke-width="1.200"/><path d="M12.500 10l3-2v6l-3-2z" fill="#222"/><rect x="3" y="9" width="6" height="2" fill="#ccd"/></svg>
<span class="t" style="left:71.3px;top:333.0px;height:16px;line-height:16px;font-size:12px;letter-spacing:-0.470px;color:#222;">Cameras</span>
<svg class="b" style="left:50px;top:352px;" width="16" height="16" viewBox="0 0 16 16"><path d="M1 1l3.500 0 5 6.500-3 2.500-5-6.500z" fill="#3a78d0" stroke="#124" stroke-width=".9"/><path d="M6.500 10l3-2.500 5.500 5.500-3.500 2.500z" fill="#f0e8c0" stroke="#a89860" stroke-width=".8"/><path d="M8 7l7 8" stroke="#d04030" stroke-width="1"/></svg>
<span class="t" style="left:71.3px;top:351.2px;height:16px;line-height:16px;font-size:12px;letter-spacing:-0.086px;color:#222;">Lights</span>
<div class="b" style="left:26px;top:741px;width:197px;height:1px;background:#8a8a8a;"></div>
<div class="b" style="left:27px;top:742px;width:58px;height:21px;background:#fff;border:1px solid #d0d0d0;border-top:none;"></div>
<div class="b" style="left:30px;top:744px;width:16px;height:17px;background:#efebdc;"></div>
<svg class="b" style="left:32px;top:745px;" width="12" height="14" viewBox="4 0 12 16"><g fill="#eaf3fc" stroke="#3f86cc" stroke-width=".9"><path d="M10 3.500l-1.800 3M10 3.500l1.800 3M8 8.500l-2.200 4M8 8.500l1.500 4M12 8.500l1.800 4M12 8.500l-1.500 4" fill="none"/><rect x="9" y="1.500" width="2" height="2.200"/><rect x="7" y="6.500" width="2" height="2.200"/><rect x="11" y="6.500" width="2" height="2.200"/><rect x="4.800" y="12" width="2" height="2.400"/><rect x="9" y="12" width="2" height="2.400"/><rect x="13" y="12" width="2" height="2.400"/></g></svg>
<span class="t" style="left:48.0px;top:744.0px;height:16px;line-height:16px;font-size:12px;letter-spacing:-0.703px;color:#333;">Scene</span>
<svg class="b" style="left:90px;top:745px;" width="14" height="14" viewBox="0 0 14 14"><circle cx="5.500" cy="5.500" r="4.200" fill="#cfe0f4" stroke="#7a8aa0" stroke-width="1.200"/><path d="M8.500 8.500l4 4" stroke="#d8a030" stroke-width="2.600" stroke-linecap="round"/></svg>
<span class="t" style="left:108.0px;top:744.5px;height:16px;line-height:16px;font-size:12px;letter-spacing:-0.503px;color:#444;">Search</span>
<svg class="b" style="left:155px;top:745px;" width="13" height="14" viewBox="0 0 13 14"><rect x=".6" y=".6" width="11.800" height="12.800" rx="1" fill="#f8f8f8" stroke="#333" stroke-width="1.100"/><rect x="3" y="3" width="5" height="4" fill="#557"/><path d="M3 10.500h6M3 10.500l1.500-1.200M3 10.500l1.500 1.200" stroke="#333" stroke-width=".9" fill="none"/><path d="M9.500 3v4" stroke="#333" stroke-width=".9"/></svg>
<span class="t" style="left:172.0px;top:744.5px;height:16px;line-height:16px;font-size:12px;letter-spacing:-0.183px;color:#444;">Propert...</span>
<div class="b" style="left:224px;top:232px;width:5px;height:532px;background:#dadada;"></div>
<div class="b" style="left:229px;top:231px;width:1437px;height:533px;background:#fff;"></div>
<div class="b" style="left:229px;top:231px;width:1437px;height:1px;background:#b2b2b2;"></div>
<div class="b" style="left:229px;top:231px;width:1px;height:532px;background:#a4a4a4;"></div>
<div class="b" style="left:230px;top:232px;width:1436px;height:1px;background:#5c6a76;"></div>
<div class="b" style="left:230px;top:232px;width:1px;height:531px;background:#586878;"></div>
<div class="b" style="left:231px;top:233px;width:1435px;height:530px;background:linear-gradient(180deg,#5277a6 0%,#6688b2 15%,#88a2c4 33%,#aabbd4 52%,#c9d4e3 70%,#e6ebf2 86%,#fdfdfe 100%);"></div>
<svg class="b" style="left:231px;top:233px;overflow:hidden" width="1435" height="530" viewBox="0 0 1435 530"><polygon points="739.3,20.4 911.3,135.7 706.5,248.0 534.8,133.8" fill="#c2b98e"/><polygon points="534.8,133.8 706.5,248.0 724.5,504.0 553.4,387.3" fill="#a69d79"/><polygon points="706.5,248.0 911.3,135.7 930.0,392.8 724.5,504.0" fill="#b3aa82"/><path d="M739.3,20.4L534.8,133.8" stroke="#f6ee48" stroke-width="1.1" fill="none"/><path d="M739.3,20.4L911.3,135.7" stroke="#f6ee48" stroke-width="1.1" fill="none"/><path d="M534.8,133.8L706.5,248.0" stroke="#f6ee48" stroke-width="1.1" fill="none"/><path d="M911.3,135.7L706.5,248.0" stroke="#f6ee48" stroke-width="1.1" fill="none"/><path d="M534.8,133.8L553.4,387.3" stroke="#f6ee48" stroke-width="1.1" fill="none"/><path d="M911.3,135.7L930.0,392.8" stroke="#f6ee48" stroke-width="1.1" fill="none"/><path d="M706.5,248.0L724.5,504.0" stroke="#f6ee48" stroke-width="1.1" fill="none"/><path d="M553.4,387.3L724.5,504.0" stroke="#f6ee48" stroke-width="1.1" fill="none"/><path d="M930.0,392.8L724.5,504.0" stroke="#f6ee48" stroke-width="1.1" fill="none"/><path d="M739.3,20.4L757.5,276.7" stroke="#f6ee48" stroke-width="1.1" fill="none"/><path d="M757.5,276.7L553.4,387.3" stroke="#f6ee48" stroke-width="1.1" fill="none"/><path d="M757.5,276.7L930.0,392.8" stroke="#f6ee48" stroke-width="1.1" fill="none"/><path d="M533.2,96.0L533.2,133.0" stroke="#00ffff" stroke-width="1.1" fill="none"/><path d="M738.5,-0.6L738.5,20.0" stroke="#00ffff" stroke-width="1.1" fill="none"/><path d="M910.3,97.8L910.3,135.0" stroke="#00ffff" stroke-width="1.1" fill="none"/><path d="M533.2,117.2L614.0,73.0" stroke="#00ffff" stroke-width="1.1" fill="none"/><path d="M659.0,48.0L738.0,4.7" stroke="#00ffff" stroke-width="1.1" fill="none"/><polygon points="533.2,117.2 540.8,109.3 544.0,115.0" fill="#00ffff"/><polygon points="738.2,4.6 730.6,12.5 727.4,6.8" fill="#00ffff"/><path d="M739.5,5.0L806.0,49.0" stroke="#00ffff" stroke-width="1.1" fill="none"/><path d="M843.5,75.0L910.3,118.8" stroke="#00ffff" stroke-width="1.1" fill="none"/><polygon points="739.0,4.8 749.6,7.9 745.9,13.4" fill="#00ffff"/><polygon points="910.3,118.8 899.7,115.7 903.4,110.2" fill="#00ffff"/><path d="M911.3,135.7L939.0,155.0" stroke="#00ffff" stroke-width="1.1" fill="none"/><path d="M930.0,392.8L958.8,411.8" stroke="#00ffff" stroke-width="1.1" fill="none"/><path d="M925.0,144.7L931.3,255.0" stroke="#00ffff" stroke-width="1.1" fill="none"/><path d="M934.6,287.0L942.0,402.0" stroke="#00ffff" stroke-width="1.1" fill="none"/><polygon points="925.0,144.7 928.9,155.0 922.3,155.4" fill="#00ffff"/><polygon points="942.0,402.0 938.1,391.7 944.7,391.3" fill="#00ffff"/><text x="605.5" y="67.8" font-family="Liberation Sans, sans-serif" font-size="21" fill="#00ffff" textLength="59.500" lengthAdjust="spacingAndGlyphs">50.000</text><text x="793.5" y="68.8" font-family="Liberation Sans, sans-serif" font-size="21" fill="#00ffff" textLength="59.500" lengthAdjust="spacingAndGlyphs">50.000</text><text x="902.8" y="278.8" font-family="Liberation Sans, sans-serif" font-size="21" fill="#00ffff" textLength="59.500" lengthAdjust="spacingAndGlyphs">60.000</text><path d="M722.5,118.8L723.3,134.8" stroke="#222" stroke-width="1.1" fill="none"/><circle cx="722.5" cy="118.8" r="4.100" fill="#d0102c" stroke="#5a0812" stroke-width=".9"/><path d="M634.3,196.2L646.9,205.7" stroke="#222" stroke-width="1.1" fill="none"/><circle cx="634.3" cy="196.2" r="4.100" fill="#d0102c" stroke="#5a0812" stroke-width=".9"/><path d="M847.4,199.5L834.0,206.7" stroke="#222" stroke-width="1.1" fill="none"/><circle cx="847.4" cy="199.5" r="4.100" fill="#d0102c" stroke="#5a0812" stroke-width=".9"/><path d="M616.4,326.5L629.7,319.3" stroke="#222" stroke-width="1.1" fill="none"/><circle cx="616.4" cy="326.5" r="4.100" fill="#d0102c" stroke="#5a0812" stroke-width=".9"/><path d="M830.5,328.3L818.0,320.2" stroke="#222" stroke-width="1.1" fill="none"/><circle cx="830.5" cy="328.3" r="4.100" fill="#d0102c" stroke="#5a0812" stroke-width=".9"/><path d="M740.5,371.5L739.9,391.0" stroke="#20a0a8" stroke-width="1.1" fill="none"/><path d="M742.4,405.8L740.2,393.0" stroke="#222" stroke-width="1.1" fill="none"/><circle cx="742.4" cy="405.8" r="4.100" fill="#d0102c" stroke="#5a0812" stroke-width=".9"/><circle cx="739.9" cy="391.4" r="2.800" fill="#30a8a8" stroke="#133" stroke-width=".9"/><g transform="translate(748.8,383.2) rotate(40)"><path d="M0,1.300v6" stroke="#e8e8e8" stroke-width="1.400"/><path d="M0,1.300v6" stroke="#777" stroke-width=".5"/><rect x="-3.300" y="-6.800" width="6.600" height="2.400" rx=".8" fill="#f6f6f6" stroke="#666" stroke-width=".7"/><path d="M-1.700,-4.400h3.400l.5,4h-4.400z" fill="#e4e4e4" stroke="#666" stroke-width=".7"/><rect x="-3.800" y="-.6" width="7.600" height="2" rx=".8" fill="#f6f6f6" stroke="#666" stroke-width=".7"/></g><path d="M724.3,505.5L723.5,486.0" stroke="#34b4c4" stroke-width="3.600" stroke-linecap="round"/><polygon points="723.0,474.0 717.8,489.0 729.0,489.0" fill="#26a8b8"/><rect x="699.5" y="505.5" width="19" height="18" fill="#fff" stroke="#111" stroke-width="1"/><rect x="705.5" y="510.5" width="6" height="6" fill="#bbb" stroke="#222" stroke-width=".8"/><rect x="707" y="512.0" width="6" height="6" fill="#aaa" stroke="#222" stroke-width=".8"/><rect x="710.5" y="515.5" width="2.500" height="2.500" fill="#e02020"/><path d="M709,507.0l-1.500,2h3zM709,522.0l-1.500,-2h3zM701.5,514.5l2,-1.500v3zM716.5,514.5l-2,-1.500v3z" fill="#e02020"/><path d="M35.39999999999998,494L35.19999999999999,485" stroke="#6672e4" stroke-width="3.200"/><polygon points="34.89999999999998,477.29999999999995 31.30000000000001,486.5 38.80000000000001,486.5" fill="#2828b4"/><polygon points="22.5,484.6 30,485.79999999999995 34.5,494 26,491.5" fill="#168616"/><polygon points="27,488.5 31.5,488 34,493.79999999999995 28,492.29999999999995" fill="#74e474"/><polygon points="51.30000000000001,485 43.5,486 37,494 47,491.5" fill="#8c1010"/><polygon points="44.5,488.5 40.5,489 37.5,493.79999999999995 45,492.29999999999995" fill="#f27c7c"/><text x="33.0" y="472.9" font-family="Liberation Sans, sans-serif" font-size="8.500" fill="#1010f0">Z</text><text x="15.6" y="483.0" font-family="Liberation Sans, sans-serif" font-size="8.500" fill="#10e010">Y</text><text x="56.0" y="484.0" font-family="Liberation Sans, sans-serif" font-size="8.500" fill="#f01010">X</text></svg>
<div class="b" style="left:0px;top:764px;width:1666px;height:7px;background:#e6e6e6;"></div>
<div class="b" style="left:0px;top:764px;width:1666px;height:1px;background:#f4f4f4;"></div>
<div class="b" style="left:0px;top:765px;width:1666px;height:6px;background:#d1d1d1;"></div>
<div class="b" style="left:0px;top:771px;width:1666px;height:1px;background:#dedede;"></div>
<div class="b" style="left:26px;top:771px;width:1640px;height:25px;background:#e6e6e6;"></div>
<span class="t" style="left:30.5px;top:775.0px;height:16px;line-height:16px;font-size:12px;letter-spacing:-0.247px;color:#444;">Catalog Browser</span>
<svg class="b" style="left:1627px;top:782px;" width="9" height="6" viewBox="0 0 9 6"><path d="M0 0h9l-4.500 5.500z" fill="#555"/></svg>
<svg class="b" style="left:1646px;top:778px;" width="9" height="11" viewBox="0 0 9 11"><path d="M2 1h5M2.800 1v5M6.200 1v5M.5 6.200h8M4.500 6.200v4.500" stroke="#444" stroke-width="1.100" fill="none"/></svg>
<svg class="b" style="left:1664px;top:779.5px;" width="9" height="9" viewBox="0 0 9 9"><path d="M.5 .5l8 8M8.500 .5l-8 8" stroke="#444" stroke-width="1.200"/></svg>
<div class="b" style="left:26px;top:796px;width:1640px;height:20px;background:#fff;"></div>
<div class="b" style="left:27px;top:797px;width:18px;height:18px;background:#ececec;border:1px solid #c4c4c4;"></div>
<svg class="b" style="left:30px;top:800px;" width="12" height="12" viewBox="0 0 12 12"><path d="M0 6l6,-5.500v3.500h6v4h-6v3.500z" fill="#b4b4b4"/></svg>
<div class="b" style="left:1661px;top:797px;width:8px;height:18px;background:#ece7da;border:1px solid #a8a8a8;"></div>
<svg class="b" style="left:1663px;top:800px;" width="10" height="12" viewBox="0 0 10 12"><path d="M1 11l9,-11" stroke="#e02020" stroke-width="1.500"/></svg>
<div class="b" style="left:26px;top:816px;width:1640px;height:147px;background:#fff;border-top:1px solid #7c7c8c;border-left:1px solid #9a9a9a;border-bottom:1px solid #8a8a8a;"></div>
<svg class="b" style="left:0;top:0" width="0" height="0"><defs>
<linearGradient id="gA" x1="0" x2="1" y1="0" y2="1"><stop offset="0" stop-color="#e0eee9"/><stop offset="1" stop-color="#aac6bc"/></linearGradient>
<linearGradient id="gB" x1="0" x2="1"><stop offset="0" stop-color="#d3e6df"/><stop offset=".55" stop-color="#b6d1c8"/><stop offset="1" stop-color="#93b4a9"/></linearGradient>
<radialGradient id="gS" cx=".4" cy=".35" r=".7"><stop offset="0" stop-color="#f0f8f6"/><stop offset=".5" stop-color="#bcd5cf"/><stop offset="1" stop-color="#88aaa2"/></radialGradient>
<linearGradient id="gH" x1="0" x2="1" y1="0" y2="1"><stop offset="0" stop-color="#eef0fa"/><stop offset="1" stop-color="#b4bcdc"/></linearGradient>
</defs></svg>
<svg class="b" style="left:48px;top:820px;" width="32" height="32" viewBox="0 0 32 32"><polygon points="2.4,5.9 16.8,1.8 30.9,5.9 25.5,8.200" fill="#dcebe5"/><polygon points="2.4,5.9 25.5,8.200 25.5,31.100 4.600,26.300" fill="url(#gA)"/><polygon points="25.5,8.200 30.9,5.9 30.300,25.700 25.5,31.100" fill="#98b8ad"/><path d="M2.400,5.900l23.100,2.300v22.900M25.500,8.200l5.400,-2.300" stroke="#eef6f2" stroke-width=".7" fill="none" opacity=".8"/></svg>
<span class="t" style="left:49.9px;top:854.8px;height:16px;line-height:16px;font-size:12px;letter-spacing:-0.069px;color:#111;">Block</span>
<svg class="b" style="left:123px;top:820px;" width="32" height="32" viewBox="0 0 32 32"><polygon points="8.400,20.300 21,23.900 26.800,17.600 26.400,23 21,29.300 9.300,24.800" fill="#eceef0"/><polygon points="21,23.900 26.800,17.600 26.400,23 21,29.300" fill="#d8dcde"/><polygon points=".9,14 14.700,2.800 32.400,9 21,23.900" fill="#2c2c8c"/><polygon points="6.600,14 15.300,6.800 26.400,10.800 19.600,19.400" fill="url(#gH)"/><polygon points="11,13.500 15.600,9.800 22,12 18.600,16.600" fill="#f2f4fa"/></svg>
<span class="t" style="left:118.9px;top:854.8px;height:16px;line-height:16px;font-size:12px;letter-spacing:-0.049px;color:#111;">H Block</span>
<svg class="b" style="left:198px;top:820px;" width="32" height="32" viewBox="0 0 32 32"><polygon points="2.200,3.600 19.900,7.200 30.700,25.700 10.500,23" fill="url(#gA)"/><polygon points="2.200,3.600 10.500,23 10,25.200 1.500,5" fill="#98b8ad"/><polygon points="10.500,23 30.700,25.700 30,28.200 10,25.200" fill="#b8d2c9"/><path d="M2.200,3.600l2.400,-1.300 17,3.700-1.700,1.200z" fill="#e4efeb"/></svg>
<span class="t" style="left:203.4px;top:854.8px;height:16px;line-height:16px;font-size:12px;letter-spacing:-0.504px;color:#111;">Slab</span>
<svg class="b" style="left:273px;top:820px;" width="32" height="32" viewBox="0 0 32 32"><polygon points=".7,18.500 16,1.400 32.800,9 22,29.900" fill="#2c2c8c"/><polygon points="7,17.600 17.300,5.900 28.100,10.800 20.500,25.700" fill="#f3f4f8"/><polygon points="7,17.600 20.500,25.700 21.800,22.800 9.500,15" fill="#c9ccd8"/></svg>
<span class="t" style="left:272.4px;top:854.8px;height:16px;line-height:16px;font-size:12px;letter-spacing:-0.336px;color:#111;">H Slab</span>
<svg class="b" style="left:348px;top:820px;" width="32" height="32" viewBox="0 0 32 32"><path d="M3.400,8c0,-5 7,-7 13,-6l10,3c3,1 4,4 4,6v15c0,3-3,5-6,5c-6,0-15,-2-19,-5z" fill="url(#gB)"/><path d="M3.400,8c0,-5 7,-7 13,-6l10,3c3,1 4,4 3,6c-1,3-5,4-9,3l-12,-2c-3,-1-5,-2-5,-4z" fill="#e0eee8"/><path d="M20.500,14v17" stroke="#98b8ad" stroke-width=".7"/></svg>
<span class="t" style="left:354.1px;top:854.8px;height:16px;line-height:16px;font-size:12px;letter-spacing:-0.043px;color:#111;">Slot</span>
<svg class="b" style="left:423px;top:820px;" width="32" height="32" viewBox="0 0 32 32"><ellipse cx="20" cy="29" rx="5" ry="1.800" fill="#e6e9eb"/><polygon points=".3,17.600 12.900,1.400 32.800,8.600 26.500,25.700" fill="#2c2c8c"/><path d="M9.500,6c2,-2.500 5.500,-2.500 8,-.5l8,9c2,2.500 2.500,5.500 .5,7.500c-2,2-5.500,1.500-7.500,-.5l-9,-8.500c-1.500,-2-2,-5 0,-7z" fill="url(#gH)"/><path d="M10.500,8c1.500,-2 4.500,-2 6.500,0l7.500,8.500c1.500,2 1.500,4 .5,5" stroke="#fff" stroke-width="1.200" fill="none" opacity=".8"/></svg>
<span class="t" style="left:423.4px;top:854.8px;height:16px;line-height:16px;font-size:12px;letter-spacing:-0.112px;color:#111;">H Slot</span>
<svg class="b" style="left:498px;top:820px;" width="32" height="32" viewBox="0 0 32 32"><path d="M2.800,7.700v16.300c0,4.500 6,8 13.500,8s13.500,-3.500 13.500,-8v-16.300z" fill="url(#gB)"/><ellipse cx="16.300" cy="7.700" rx="13.500" ry="6.300" fill="#e2efea"/><path d="M2.800,7.700c0,3.500 6,6.300 13.500,6.300s13.500,-2.800 13.500,-6.300" stroke="#f4faf8" stroke-width=".8" fill="none"/></svg>
<span class="t" style="left:492.4px;top:854.8px;height:16px;line-height:16px;font-size:12px;letter-spacing:-0.004px;color:#111;">Cylinder</span>
<svg class="b" style="left:573px;top:820px;" width="32" height="32" viewBox="0 0 32 32"><ellipse cx="17" cy="29" rx="6" ry="2" fill="#e4e7ea"/><polygon points=".7,13.100 16,1.800 32.800,13.600 16.900,27.500" fill="#2c2c8c"/><ellipse cx="17.800" cy="14" rx="9.900" ry="7.200" fill="#cdd1e2"/><ellipse cx="17.600" cy="16.300" rx="7.800" ry="4.800" fill="#f4f5fa"/></svg>
<span class="t" style="left:561.4px;top:854.8px;height:16px;line-height:16px;font-size:12px;letter-spacing:-0.003px;color:#111;">H Cylinder</span>
<svg class="b" style="left:648px;top:820px;" width="32" height="32" viewBox="0 0 32 32"><path d="M2.400,13v13c1,4 7,6 13,4.500c7,-1.500 14,-7 15,-12v-14z" fill="url(#gB)"/><ellipse cx="16.200" cy="8.500" rx="14.500" ry="5.800" transform="rotate(-19 16.200 8.500)" fill="#e2efea"/></svg>
<span class="t" style="left:647.6px;top:854.8px;height:16px;line-height:16px;font-size:12px;letter-spacing:-0.266px;color:#111;">Ellipse</span>
<svg class="b" style="left:723px;top:820px;" width="32" height="32" viewBox="0 0 32 32"><ellipse cx="16" cy="28" rx="6" ry="2" fill="#e4e7ea"/><polygon points=".9,13.100 17.400,1.800 32.400,12.600 15.600,25.700" fill="#2c2c8c"/><ellipse cx="16.500" cy="13.100" rx="9.200" ry="6.200" transform="rotate(-18 16.500 13.100)" fill="#cdd1e2"/><ellipse cx="16.300" cy="15" rx="7.200" ry="4" transform="rotate(-18 16.300 15)" fill="#f4f5fa"/></svg>
<span class="t" style="left:716.9px;top:854.8px;height:16px;line-height:16px;font-size:12px;letter-spacing:-0.262px;color:#111;">H Ellipse</span>
<svg class="b" style="left:798px;top:820px;" width="32" height="32" viewBox="0 0 32 32"><polygon points="2,11 10,3.500 25,2 31,10.500 19,17" fill="#dcebe5"/><polygon points="2,11 19,17 17.500,31 8,26" fill="#b8d2c9"/><polygon points="19,17 31,10.500 28.500,21.500 17.500,31" fill="#98b8ad"/></svg>
<span class="t" style="left:802.6px;top:854.8px;height:16px;line-height:16px;font-size:12px;letter-spacing:0.039px;color:#111;">Poly</span>
<svg class="b" style="left:873px;top:820px;" width="32" height="32" viewBox="0 0 32 32"><ellipse cx="25.500" cy="22.500" rx="6" ry="5" fill="#e2e4e8"/><polygon points=".7,20.300 14.200,2.300 32.800,3.600 18.700,25.700" fill="#2c2c8c"/><polygon points="8.500,17 11.500,9.500 17.500,4.800 23,5.500 24,10.500 20.500,18.500 14,22.500 9.500,21.500" fill="url(#gH)"/><polygon points="12,15.500 14,10.500 18,7.500 21,8.500 20.500,13 17.500,18 13.500,19.500" fill="#e8ebf6"/></svg>
<span class="t" style="left:871.8px;top:854.8px;height:16px;line-height:16px;font-size:12px;letter-spacing:-0.007px;color:#111;">H Poly</span>
<svg class="b" style="left:948px;top:820px;" width="32" height="32" viewBox="0 0 32 32"><circle cx="16.500" cy="15.400" r="14.400" fill="url(#gS)"/><circle cx="16.500" cy="15.400" r="13.900" fill="none" stroke="#92b0aa" stroke-width="1"/><path d="M7,17c0,-7 8,-11 15,-8c-5,0-9,3-9,8c0,4 4,6 8,5c-6,4-14,1-14,-5z" fill="#fff" opacity=".45"/><ellipse cx="13" cy="8" rx="6" ry="3" fill="#fff" opacity=".5"/></svg>
<span class="t" style="left:946.0px;top:854.8px;height:16px;line-height:16px;font-size:12px;letter-spacing:-0.315px;color:#111;">Sphere</span>
<svg class="b" style="left:1023px;top:820px;" width="32" height="32" viewBox="0 0 32 32"><polygon points=".9,17.200 17.100,2.800 31.500,4.600 30.400,9 13.800,23" fill="#2c2c8c"/><path d="M8.500,17c1,-7 10,-11 19,-9c5,4 4,14-2,19c-4,3-9,2-12,-1c-1,-1-1.500,-2-1.500,-3.500c-2,-.5-3.500,-2.500-3.500,-5.500z" fill="url(#gH)" stroke="#8088b8" stroke-width=".6"/><path d="M12,14c4,-3 10,-1 11,4c.5,3-1,5-3,6" stroke="#fff" stroke-width="1.600" fill="none" opacity=".8"/></svg>
<span class="t" style="left:1015.4px;top:854.8px;height:16px;line-height:16px;font-size:12px;letter-spacing:-0.336px;color:#111;">H Sphere</span>
<svg class="b" style="left:1098px;top:820px;" width="32" height="32" viewBox="0 0 32 32"><path d="M4.600,1.800l25.200,7.200c.5,5-1,9-1,12c-3,4-9,8-15.200,9.200l-1.800,-.9z" fill="url(#gB)"/><path d="M4.600,1.800l25.200,7.200c-2,3-9,5-16.500,4.500z" fill="#e0eee8"/><path d="M4.600,1.800l8.700,11.700.3,16.700-1.800,-.9z" fill="#b8d2c9"/><path d="M13.300,13.500l.3,16.700" stroke="#eef6f2" stroke-width=".7"/></svg>
<span class="t" style="left:1106.6px;top:854.8px;height:16px;line-height:16px;font-size:12px;letter-spacing:-0.581px;color:#111;">Pie</span>
<svg class="b" style="left:1173px;top:820px;" width="32" height="32" viewBox="0 0 32 32"><path d="M23.200,5.900c5,-1 9,2 9,7c0,4-4,7-9,6.500z" fill="#e4e6ea"/><path d="M27,7c3,1 4.500,3.500 4.500,6c0,2.500-1.500,4.500-4,5.500z" fill="#f2f3f6"/><polygon points="3.900,2.300 23.200,7.700 22.300,31.100 3.400,23" fill="#2c2c8c"/><path d="M13.300,14.900l-5.500,-3.500c3,-4.500 10,-3.500 12,1.500c1.500,5-3,9.500-8,8c-2,-.7-3.500,-2-4.300,-4z" fill="#e8eaf6"/><path d="M13.300,14.900l-5.500,-3.500c-1,2-1,4-.3,5.500z" fill="#fff"/></svg>
<span class="t" style="left:1175.2px;top:854.8px;height:16px;line-height:16px;font-size:12px;letter-spacing:-0.189px;color:#111;">H Pie</span>
<svg class="b" style="left:1248px;top:820px;" width="32" height="32" viewBox="0 0 32 32"><circle cx="16.200" cy="15.400" r="11.450" fill="none" stroke="url(#gS)" stroke-width="6.500"/><circle cx="16.200" cy="15.400" r="14.500" fill="none" stroke="#86aaa6" stroke-width=".9"/><circle cx="16.200" cy="15.400" r="8.300" fill="none" stroke="#7a9e9a" stroke-width="1"/><path d="M6.500,10c3,-5.500 11,-7 16.500,-3" stroke="#fff" stroke-width="1.800" fill="none" opacity=".65"/></svg>
<span class="t" style="left:1250.0px;top:854.8px;height:16px;line-height:16px;font-size:12px;letter-spacing:-0.109px;color:#111;">Torus</span>
<svg class="b" style="left:1323px;top:820px;" width="32" height="32" viewBox="0 0 32 32"><polygon points=".9,23 8.400,2 32.200,6.400 24.600,29.500" fill="#2c2c8c"/><ellipse cx="16.400" cy="15.400" rx="11.200" ry="10" transform="rotate(-15 16.400 15.400)" fill="#dde1f2"/><ellipse cx="16.400" cy="15.400" rx="8" ry="7" transform="rotate(-15 16.400 15.400)" fill="none" stroke="#bcc3e0" stroke-width="1.500"/><ellipse cx="16.400" cy="15.400" rx="4.300" ry="3.800" transform="rotate(-15 16.400 15.400)" fill="#3a3a9c"/></svg>
<span class="t" style="left:1318.9px;top:854.8px;height:16px;line-height:16px;font-size:12px;letter-spacing:-0.018px;color:#111;">H Torus</span>
<svg class="b" style="left:1398px;top:820px;" width="32" height="32" viewBox="0 0 32 32"><path d="M29.600,2l-11.600,27.500c-4,1.500-10,-.5-13.500,-4.500c-3,-3.500-3.500,-8-1.500,-11z" fill="url(#gB)"/><path d="M29.600,2l-26.600,12c3,-3 9,-2.500 13,1z" fill="#e2efea"/><path d="M29.600,2l-20,23" stroke="#eef6f2" stroke-width=".9" opacity=".8"/><path d="M3,14c-2,3-1.500,7.500 1.500,11c3.500,4 9.500,6 13.500,4.500" stroke="#8fb0a6" stroke-width=".8" fill="none"/></svg>
<span class="t" style="left:1400.2px;top:854.8px;height:16px;line-height:16px;font-size:12px;letter-spacing:-0.072px;color:#111;">Cone</span>
<svg class="b" style="left:1473px;top:820px;" width="32" height="32" viewBox="0 0 32 32"><polygon points="1.700,24.100 17.200,2 27,2.500 24,8 11.800,28.400" fill="#2c2c8c"/><path d="M26,3.500c2.500,7 4.500,15 5.300,22.700c-6,1.500-13,1-18.300,-1c-1.500,-2-2.200,-5-2.200,-7.600c3,-6 9,-11 15.200,-14.100z" fill="url(#gH)"/><path d="M13,25.200c5,2 12,2.500 18.300,1" stroke="#8088b8" stroke-width=".9" fill="none"/><path d="M26,3.500c-4,6-8,13-10.500,21" stroke="#fff" stroke-width="1.400" fill="none" opacity=".7"/></svg>
<span class="t" style="left:1469.2px;top:854.8px;height:16px;line-height:16px;font-size:12px;letter-spacing:-0.048px;color:#111;">H Cone</span>
<svg class="b" style="left:1548px;top:820px;" width="32" height="32" viewBox="0 0 32 32"><polygon points="19,2 30.800,30.100 2.300,30.100" fill="#cbd8d0"/><polygon points="19,2 6.500,14 2.300,30.100" fill="#98b8ad"/><polygon points="19,2 2.300,30.100 10,22" fill="#b8d2c9"/><path d="M2.300,30.100h28.500" stroke="#a9bdb4" stroke-width=".8"/></svg>
<span class="t" style="left:1542.4px;top:854.8px;height:16px;line-height:16px;font-size:12px;letter-spacing:-0.002px;color:#111;">Pyramid</span>
<svg class="b" style="left:48px;top:894px;" width="32" height="32" viewBox="0 0 32 32"><polygon points="1.300,25.200 17.500,2 27.300,2.500 26.500,5.500 12,28.500 9.500,26.500" fill="#2c2c8c"/><polygon points="26.200,4.600 30.100,24.100 7.800,24.100" fill="#eceef8"/><polygon points="26.200,4.600 30.100,24.100 24,20" fill="#aab0d0"/><polygon points="7.800,24.100 30.100,24.100 24,20 13,20.500" fill="#d4d8ec"/></svg>
<span class="t" style="left:36.4px;top:930.0px;height:16px;line-height:16px;font-size:12px;letter-spacing:-0.002px;color:#111;">H Pyramid</span>
<svg class="b" style="left:123px;top:894px;" width="32" height="32" viewBox="0 0 32 32"><path d="M2,12.200c1,-4 6,-7.500 12,-9c4,-1 9,-.5 12,2c3,3 4,8 3,13c-1,6-5,11-10,12.400c-3,.5-6,-1-9,-4c-4,-4-8,-10-10,-14.400z" fill="url(#gB)"/><path d="M2,12.200c2,-2 6,-2 10,1c5,4 8,10 7,17.400c-3,.5-6,-1-9,-4c-4,-4-7,-9-8,-14.400z" fill="#e4f0ec"/><path d="M14,3.200l-2,10M22,4l-6,13" stroke="#eef6f2" stroke-width=".8" opacity=".8"/></svg>
<span class="t" style="left:113.4px;top:930.0px;height:16px;line-height:16px;font-size:12px;letter-spacing:-0.224px;color:#111;">Part Cone</span>
<svg class="b" style="left:198px;top:894px;" width="32" height="32" viewBox="0 0 32 32"><polygon points="1.300,25.200 17.500,2 27.300,2.500 26.500,5.500 12,28.500 9.500,26.500" fill="#2c2c8c"/><path d="M27.300,4.500c1.500,5 1.500,10 .8,15c-6,1-11,4-14.500,8.500l-4,-2.500c3,-9 9,-17 17.700,-21z" fill="url(#gH)"/><path d="M13.600,28c3.500,-4.500 8.500,-7.500 14.500,-8.500" stroke="#8890b8" stroke-width=".9" fill="none"/><path d="M27.300,4.500c-6,5-10,11-13,18" stroke="#fff" stroke-width="1.500" fill="none" opacity=".7"/></svg>
<span class="t" style="left:182.5px;top:930.0px;height:16px;line-height:16px;font-size:12px;letter-spacing:-0.201px;color:#111;">H Part Cone</span>
<svg class="b" style="left:273px;top:894px;" width="32" height="32" viewBox="0 0 32 32"><polygon points="3,7.900 22.500,2 32.200,4.200 25.700,6.800" fill="#98b8ad"/><polygon points="3,7.900 25.700,6.800 20.300,30.600 1.900,23" fill="#deece6"/><polygon points="25.700,6.800 32.200,4.200 20.300,30.600" fill="#b8d2c9"/></svg>
<span class="t" style="left:281.0px;top:930.0px;height:16px;line-height:16px;font-size:12px;letter-spacing:-0.657px;color:#111;">Bar</span>
<svg class="b" style="left:348px;top:894px;" width="32" height="32" viewBox="0 0 32 32"><polygon points="2.800,6.800 7.100,2.500 34.500,27.500 28.700,31.700" fill="#d3e3dc"/><polygon points="2.800,6.800 28.700,31.700 3.800,26.200" fill="#afc7be"/><path d="M2.800,6.800l25.900,24.900" stroke="#e6f0ec" stroke-width=".7"/></svg>
<span class="t" style="left:356.4px;top:930.0px;height:16px;line-height:16px;font-size:12px;letter-spacing:-0.672px;color:#111;">Rib</span>
<svg class="b" style="left:423px;top:894px;" width="32" height="32" viewBox="0 0 32 32"><ellipse cx="13" cy="28.500" rx="7.500" ry="2.800" fill="#b8d2c9"/><path d="M9,13l-3,14.500c3,2.500 10,2.500 14,0l-3,-8l5,-6z" fill="url(#gB)"/><path d="M8,27c2,-5 6,-9 9,-13" stroke="#f2f8f6" stroke-width="2.200" fill="none"/><ellipse cx="18.700" cy="10" rx="13.500" ry="6.300" transform="rotate(22 18.700 10)" fill="#dbe9e4" stroke="#98b8ad" stroke-width=".6"/></svg>
<span class="t" style="left:414.5px;top:930.0px;height:16px;line-height:16px;font-size:12px;letter-spacing:-0.356px;color:#111;">L3 Circles</span>
<svg class="b" style="left:498px;top:894px;" width="32" height="32" viewBox="0 0 32 32"><polygon points="10,7 15,1.500 31,12 24,15" fill="#e0eee8"/><polygon points="10,7 24,15 27,24 14,31 3,21 11,16" fill="url(#gB)"/><polygon points="24,15 31,12 27,19" fill="#98b8ad"/><path d="M11,16c5,0 10,2 13,7" stroke="#f4faf8" stroke-width="1.600" fill="none"/><polygon points="3,21 14,31 16,24 9,18" fill="#e4f0ec" opacity=".7"/></svg>
<span class="t" style="left:501.2px;top:930.0px;height:16px;line-height:16px;font-size:12px;letter-spacing:-0.209px;color:#111;">Twist</span>
<svg class="b" style="left:573px;top:894px;" width="32" height="32" viewBox="0 0 32 32"><polygon points="2.700,30.600 7,13.300 28.600,2 26.500,30.600" fill="url(#gA)"/><polygon points="28.600,2 30.800,3.600 28.700,31.500 26.500,30.600" fill="#98b8ad"/><polygon points="2.700,30.600 26.500,30.600 28.700,31.500 3.500,32" fill="#98b8ad"/><path d="M13.500,29.500l2.200,-7.600" stroke="#2030d8" stroke-width="1.100"/><path d="M8,30.200h5" stroke="#e82020" stroke-width="1.400"/></svg>
<span class="t" style="left:575.4px;top:930.0px;height:16px;line-height:16px;font-size:12px;letter-spacing:-0.537px;color:#111;">Slab2</span>
<svg class="b" style="left:648px;top:894px;" width="32" height="32" viewBox="0 0 32 32"><path d="M9,5c6,-3 16,-2 23.500,6c-2,7-7,15-14,20c-4,-7-8,-17-9.500,-26z" fill="url(#gB)"/><ellipse cx="12" cy="17.600" rx="9.800" ry="13.600" transform="rotate(-12 12 17.600)" fill="#d5e5df"/><path d="M9,5c6,-3 16,-2 23.500,6" stroke="#f0f8f4" stroke-width="1.200" fill="none"/><path d="M12,17.600l4.300,13" stroke="#2030d8" stroke-width="1.100"/><path d="M16,31l3,-.8" stroke="#e82020" stroke-width="1.400"/></svg>
<span class="t" style="left:639.4px;top:930.0px;height:16px;line-height:16px;font-size:12px;letter-spacing:-0.078px;color:#111;">Cylinder2</span>
<svg class="b" style="left:723px;top:894px;" width="32" height="32" viewBox="0 0 32 32"><circle cx="16.900" cy="16.500" r="14.700" fill="url(#gS)"/><circle cx="16.900" cy="16.500" r="14.200" fill="none" stroke="#92b0aa" stroke-width="1"/><path d="M6,19c3,-7 15,-9 22,-3c-6,-2-13,-1-16,4c-2,3-1,6 1,8c-4,-1-8,-5-7,-9z" fill="#fff" opacity=".4"/><ellipse cx="14" cy="8.500" rx="7" ry="3.500" fill="#fff" opacity=".5"/><path d="M13,31h6" stroke="#e82020" stroke-width="1.800"/></svg>
<span class="t" style="left:718.5px;top:930.0px;height:16px;line-height:16px;font-size:12px;letter-spacing:-0.508px;color:#111;">Sphere2</span>
<svg class="b" style="left:798px;top:894px;" width="32" height="32" viewBox="0 0 32 32"><path d="M3,3.500c10,-3 22,2 25,12c1,5 0,10-2,14l-9,-3.500c2,-7-1,-13-9,-14.500l-5,-.5z" fill="url(#gB)"/><path d="M3,3.500c10,-3 22,2 25,12c-4,-8-13,-11.500-24,-9z" fill="#f2f8f6"/><path d="M4,8c9,-1.500 17,3 19,11c.7,3 .3,6-.5,9" stroke="#a7b3ae" stroke-width="2" fill="none"/><path d="M3,11l5,.5c8,1.500 11,7.500 9,14.500" stroke="#e8f0ec" stroke-width="1.500" fill="none"/></svg>
<span class="t" style="left:781.8px;top:930.0px;height:16px;line-height:16px;font-size:12px;letter-spacing:-0.090px;color:#111;">Partial Torus</span>
<svg class="b" style="left:873px;top:894px;" width="32" height="32" viewBox="0 0 32 32"><ellipse cx="16.300" cy="15.400" rx="16.200" ry="10" transform="rotate(-30 16.300 15.400)" fill="url(#gS)"/><ellipse cx="16.300" cy="15.400" rx="15.700" ry="9.500" transform="rotate(-30 16.300 15.400)" fill="none" stroke="#98b6b0" stroke-width=".8"/><ellipse cx="13" cy="11.500" rx="8" ry="3.500" transform="rotate(-30 13 11.500)" fill="#fff" opacity=".4"/></svg>
<span class="t" style="left:867.5px;top:930.0px;height:16px;line-height:16px;font-size:12px;letter-spacing:-0.111px;color:#111;">Ellipsoid</span>
<svg class="b" style="left:948px;top:894px;" width="32" height="32" viewBox="0 0 32 32"><polygon points="2,27.600 15,6.500 32,5.400 22.300,28.400" fill="#14145a"/><path d="M32,7.300c.5,8-2,15-8.100,19.500c-5,1-9,-2-11.300,-6.500c3,-7 10,-12 19.400,-13z" fill="#ccd0f4"/><path d="M31,9c0,6-2.500,12-7.500,16c1,-6 4,-11 7.500,-16z" fill="#eceefc"/></svg>
<span class="t" style="left:936.4px;top:930.0px;height:16px;line-height:16px;font-size:12px;letter-spacing:-0.064px;color:#111;">H Ellipsoid</span>
<div class="b" style="left:26px;top:963px;width:1640px;height:22px;background:#e6e6e6;"></div>
<div class="b" style="left:26px;top:963px;width:49px;height:22px;background:#fff;border:1px solid #adadad;border-top:none;"></div>
<span class="t" style="left:32.0px;top:965.0px;height:16px;line-height:16px;font-size:12px;letter-spacing:-0.648px;color:#333;">Shapes</span>
<span class="t" style="left:82.3px;top:965.5px;height:16px;line-height:16px;font-size:12px;letter-spacing:-0.248px;color:#444;">Advshaps</span>
<span class="t" style="left:146.0px;top:965.5px;height:16px;line-height:16px;font-size:12px;letter-spacing:-0.636px;color:#444;">FlexShapes</span>
<span class="t" style="left:216.0px;top:965.5px;height:16px;line-height:16px;font-size:12px;letter-spacing:-0.055px;color:#444;">SheetMtl</span>
<span class="t" style="left:276.0px;top:965.5px;height:16px;line-height:16px;font-size:12px;letter-spacing:-0.003px;color:#444;">Tools</span>
<span class="t" style="left:318.0px;top:965.5px;height:16px;line-height:16px;font-size:12px;letter-spacing:-0.143px;color:#444;">Materials</span>
<span class="t" style="left:378.9px;top:965.5px;height:16px;line-height:16px;font-size:12px;letter-spacing:0.226px;color:#444;">Animatn</span>
<span class="t" style="left:438.0px;top:965.5px;height:16px;line-height:16px;font-size:12px;letter-spacing:-0.418px;color:#444;">Surfaces</span>
<span class="t" style="left:495.4px;top:965.5px;height:16px;line-height:16px;font-size:12px;letter-spacing:-0.343px;color:#444;">Textures</span>
<span class="t" style="left:552.0px;top:965.5px;height:16px;line-height:16px;font-size:12px;letter-spacing:-0.129px;color:#444;">Bumps</span>
<span class="t" style="left:602.4px;top:965.5px;height:16px;line-height:16px;font-size:12px;letter-spacing:-0.198px;color:#444;">Colors</span>
<span class="t" style="left:649.0px;top:965.5px;height:16px;line-height:16px;font-size:12px;letter-spacing:-0.470px;color:#444;">Steel Frames</span>
<span class="t" style="left:728.4px;top:965.5px;height:16px;line-height:16px;font-size:12px;letter-spacing:-0.211px;color:#444;">Tank</span>
<div class="b" style="left:0px;top:985px;width:1666px;height:7px;background:#f0f0f0;"></div>
<div class="b" style="left:0px;top:985px;width:1666px;height:1px;background:#dcdcdc;"></div>
<div class="b" style="left:1150px;top:990px;width:4px;height:2px;background:#555;"></div>
<div class="b" style="left:1172px;top:990px;width:10px;height:2px;background:#555;"></div>
<div class="b" style="left:1243px;top:990px;width:12px;height:2px;background:#3a78b8;"></div>
<div class="b" style="left:1322px;top:990px;width:12px;height:2px;background:#444;"></div>
<div class="b" style="left:1362px;top:990px;width:30px;height:2px;background:#c8c8c8;"></div>
<div class="b" style="left:1405px;top:990px;width:8px;height:2px;background:#222;"></div>
<div class="b" style="left:1452px;top:990px;width:22px;height:2px;background:#d0d0d0;"></div>
<div class="b" style="left:1500px;top:989px;width:88px;height:3px;background:#fff;border:1px solid #c8c8c8;border-bottom:none;"></div>
<div class="b" style="left:1591px;top:989px;width:64px;height:3px;background:#fff;border:1px solid #c8c8c8;border-bottom:none;"></div>
<div class="b" style="left:0px;top:338px;width:26px;height:593px;background:#efefef;"></div>
<div class="b" style="left:5px;top:344px;width:2px;height:2px;background:#b8b8b8;"></div>
<div class="b" style="left:9px;top:344px;width:2px;height:2px;background:#b8b8b8;"></div>
<div class="b" style="left:13px;top:344px;width:2px;height:2px;background:#b8b8b8;"></div>
<div class="b" style="left:17px;top:344px;width:2px;height:2px;background:#b8b8b8;"></div>
<svg class="b" style="left:5px;top:354px;" width="16" height="16" viewBox="0 0 16 16"><path d="M0,5h5M0,10h5" stroke="#9c9c9c" stroke-width=".8"/><rect x="5" y="3" width="9" height="10" rx="1.500" fill="#c8c8c8" stroke="#9c9c9c" stroke-width=".8"/><rect x="7" y="1.500" width="9" height="10" rx="1.500" fill="none" stroke="#9c9c9c" stroke-width=".8"/></svg>
<svg class="b" style="left:5px;top:375px;" width="16" height="16" viewBox="0 0 16 16"><circle cx="6.500" cy="9.800" r="6" fill="#c8c8c8" stroke="#9c9c9c" stroke-width=".8"/><rect x="4.500" y="1" width="11" height="9" fill="#d8d8d8" stroke="#9c9c9c" stroke-width=".9"/><path d="M4.500,10a5,5 0 0 1 7,-5" fill="none" stroke="#9c9c9c" stroke-width=".8"/></svg>
<div class="b" style="left:2px;top:399px;width:22px;height:1px;background:#d8d8d8;"></div>
<svg class="b" style="left:5px;top:405px;" width="16" height="16" viewBox="0 0 16 16"><circle cx="6.500" cy="9.800" r="6" fill="#c8c8c8" stroke="#9c9c9c" stroke-width=".8"/><rect x="4.500" y="1" width="11" height="9" fill="#c8c8c8" stroke="#9c9c9c" stroke-width=".9"/></svg>
<svg class="b" style="left:5px;top:427px;" width="16" height="16" viewBox="0 0 16 16"><circle cx="6.500" cy="9.800" r="6" fill="#c8c8c8" stroke="#9c9c9c" stroke-width=".8"/><rect x="4.500" y="1" width="11" height="9" fill="#c8c8c8" stroke="#9c9c9c" stroke-width=".9"/><path d="M4.500,10v-5a5.500,5.500 0 0 1 7,5z" fill="#e4e4e4" stroke="#9c9c9c" stroke-width=".7"/></svg>
<svg class="b" style="left:5px;top:449px;" width="16" height="16" viewBox="0 0 16 16"><circle cx="6.500" cy="9.800" r="6" fill="#c8c8c8" stroke="#9c9c9c" stroke-width=".8"/><rect x="4.500" y="1" width="11" height="9" fill="#fafafa" stroke="#9c9c9c" stroke-width=".9"/><path d="M4.500,10v-5a5.500,5.500 0 0 1 7,5" fill="none" stroke="#9c9c9c" stroke-width=".7"/></svg>
<svg class="b" style="left:6px;top:470px;" width="5" height="7" viewBox="0 0 5 7"><path d="M4,0v6l-4,-3z" fill="#666"/></svg>
<div class="b" style="left:5px;top:485px;width:2px;height:2px;background:#b8b8b8;"></div>
<div class="b" style="left:9px;top:485px;width:2px;height:2px;background:#b8b8b8;"></div>
<div class="b" style="left:13px;top:485px;width:2px;height:2px;background:#b8b8b8;"></div>
<div class="b" style="left:17px;top:485px;width:2px;height:2px;background:#b8b8b8;"></div>
<svg class="b" style="left:5px;top:494.5px;" width="17" height="17" viewBox="0 0 17 17"><polygon points=".5,5.3 11.2,5.3 11.2,16 .5,16" fill="#f2f6fc"/><polygon points=".5,5.3 5.300,.5 16,.5 11.2,5.3" fill="#dce8f6"/><polygon points="11.2,5.3 16,.5 16,11.200 11.2,16" fill="#b0cae8"/><path d="M5.300,.5v10.700h10.700M5.300,11.200l-4.800,4.800" fill="none" stroke="#9ab8dc" stroke-width=".8"/><polygon points=".5,5.3 11.2,5.3 11.2,16 .5,16" fill="#2c62a8" opacity="1"/><path d="M.5,5.3h10.700v10.700h-10.700zM.5,5.3l4.800,-4.800h10.700v10.700l-4.800,4.800M11.200,5.300l4.800,-4.800" fill="none" stroke="#2c62a8" stroke-width=".9"/></svg>
<svg class="b" style="left:5px;top:516.5px;" width="17" height="17" viewBox="0 0 17 17"><polygon points=".5,5.3 11.2,5.3 11.2,16 .5,16" fill="#f2f6fc"/><polygon points=".5,5.3 5.300,.5 16,.5 11.2,5.3" fill="#dce8f6"/><polygon points="11.2,5.3 16,.5 16,11.200 11.2,16" fill="#b0cae8"/><path d="M5.300,.5v10.700h10.700M5.300,11.200l-4.800,4.800" fill="none" stroke="#9ab8dc" stroke-width=".8"/><polygon points=".5,5.3 5.300,.5 16,.5 11.2,5.3" fill="#2c62a8" opacity="1"/><path d="M.5,5.3h10.700v10.700h-10.700zM.5,5.3l4.800,-4.800h10.700v10.700l-4.800,4.800M11.200,5.300l4.800,-4.800" fill="none" stroke="#2c62a8" stroke-width=".9"/></svg>
<svg class="b" style="left:5px;top:538.5px;" width="17" height="17" viewBox="0 0 17 17"><polygon points=".5,5.3 11.2,5.3 11.2,16 .5,16" fill="#f2f6fc"/><polygon points=".5,5.3 5.300,.5 16,.5 11.2,5.3" fill="#dce8f6"/><polygon points="11.2,5.3 16,.5 16,11.200 11.2,16" fill="#b0cae8"/><path d="M5.300,.5v10.700h10.700M5.300,11.200l-4.800,4.800" fill="none" stroke="#9ab8dc" stroke-width=".8"/><polygon points=".5,5.3 5.300,.5 5.300,11.200 .5,16" fill="#2c62a8" opacity=".82"/><path d="M.5,5.3h10.700v10.700h-10.700zM.5,5.3l4.800,-4.800h10.700v10.700l-4.800,4.800M11.200,5.300l4.800,-4.800" fill="none" stroke="#2c62a8" stroke-width=".9"/></svg>
<svg class="b" style="left:5px;top:560.5px;" width="17" height="17" viewBox="0 0 17 17"><polygon points=".5,5.3 11.2,5.3 11.2,16 .5,16" fill="#f2f6fc"/><polygon points=".5,5.3 5.300,.5 16,.5 11.2,5.3" fill="#dce8f6"/><polygon points="11.2,5.3 16,.5 16,11.200 11.2,16" fill="#b0cae8"/><path d="M5.300,.5v10.700h10.700M5.300,11.200l-4.800,4.800" fill="none" stroke="#9ab8dc" stroke-width=".8"/><polygon points="11.2,5.3 16,.5 16,11.200 11.2,16" fill="#2c62a8" opacity="1"/><path d="M.5,5.3h10.700v10.700h-10.700zM.5,5.3l4.800,-4.800h10.700v10.700l-4.800,4.800M11.200,5.300l4.800,-4.800" fill="none" stroke="#2c62a8" stroke-width=".9"/></svg>
<svg class="b" style="left:5px;top:582.5px;" width="17" height="17" viewBox="0 0 17 17"><polygon points=".5,5.3 11.2,5.3 11.2,16 .5,16" fill="#f2f6fc"/><polygon points=".5,5.3 5.300,.5 16,.5 11.2,5.3" fill="#dce8f6"/><polygon points="11.2,5.3 16,.5 16,11.200 11.2,16" fill="#b0cae8"/><path d="M5.300,.5v10.700h10.700M5.300,11.200l-4.800,4.800" fill="none" stroke="#9ab8dc" stroke-width=".8"/><polygon points="5.300,.5 16,.5 16,11.200 5.300,11.200" fill="#2c62a8" opacity=".82"/><path d="M.5,5.3h10.700v10.700h-10.700zM.5,5.3l4.800,-4.800h10.700v10.700l-4.800,4.800M11.200,5.300l4.800,-4.800" fill="none" stroke="#2c62a8" stroke-width=".9"/></svg>
<svg class="b" style="left:5px;top:604.5px;" width="17" height="17" viewBox="0 0 17 17"><polygon points=".5,5.3 11.2,5.3 11.2,16 .5,16" fill="#f2f6fc"/><polygon points=".5,5.3 5.300,.5 16,.5 11.2,5.3" fill="#dce8f6"/><polygon points="11.2,5.3 16,.5 16,11.200 11.2,16" fill="#b0cae8"/><path d="M5.300,.5v10.700h10.700M5.300,11.200l-4.800,4.800" fill="none" stroke="#9ab8dc" stroke-width=".8"/><polygon points=".5,16 5.300,11.200 16,11.200 11.2,16" fill="#2c62a8" opacity=".82"/><path d="M.5,5.3h10.700v10.700h-10.700zM.5,5.3l4.800,-4.800h10.700v10.700l-4.800,4.800M11.200,5.300l4.800,-4.800" fill="none" stroke="#2c62a8" stroke-width=".9"/></svg>
<svg class="b" style="left:5px;top:626.5px;" width="17" height="17" viewBox="0 0 17 17"><polygon points="2.400,2 11,2 15,6 6.500,6" fill="#3a72b8"/><polygon points="2.400,2 6.500,6 6.500,14.600 2.400,10.500" fill="#3a72b8"/><rect x="6.500" y="6" width="8.500" height="8.600" fill="#4a84c8"/><path d="M2.400,2h8.600l4,4v8.600h-8.500l-4.100,-4.100zM2.400,2l4.100,4h8.500M6.500,6v8.600" fill="none" stroke="#1c3c70" stroke-width=".9" stroke-linejoin="round"/></svg>
<svg class="b" style="left:5px;top:648.5px;" width="17" height="17" viewBox="0 0 17 17"><polygon points="2.400,2 11,2 15,6 6.500,6" fill="#fff"/><polygon points="2.400,2 6.500,6 6.500,14.600 2.400,10.500" fill="#3a72b8"/><rect x="6.500" y="6" width="8.500" height="8.600" fill="#4a84c8"/><path d="M2.400,2h8.600l4,4v8.600h-8.500l-4.100,-4.100zM2.400,2l4.100,4h8.500M6.500,6v8.600" fill="none" stroke="#1c3c70" stroke-width=".9" stroke-linejoin="round"/></svg>
<svg class="b" style="left:5px;top:670.5px;" width="17" height="17" viewBox="0 0 17 17"><polygon points="2.400,2 11,2 15,6 6.500,6" fill="#3a72b8"/><polygon points="2.400,2 6.500,6 6.500,14.600 2.400,10.500" fill="#fff"/><rect x="6.500" y="6" width="8.500" height="8.600" fill="#4a84c8"/><path d="M2.400,2h8.600l4,4v8.600h-8.500l-4.100,-4.100zM2.400,2l4.100,4h8.500M6.500,6v8.600" fill="none" stroke="#1c3c70" stroke-width=".9" stroke-linejoin="round"/></svg>
<svg class="b" style="left:5px;top:692.5px;" width="17" height="17" viewBox="0 0 17 17"><polygon points="2.400,2 11,2 15,6 6.500,6" fill="#fff"/><polygon points="2.400,2 6.500,6 6.500,14.600 2.400,10.500" fill="#fff"/><rect x="6.500" y="6" width="8.500" height="8.600" fill="#4a84c8"/><path d="M2.400,2h8.600l4,4v8.600h-8.500l-4.100,-4.100zM2.400,2l4.100,4h8.500M6.500,6v8.600" fill="none" stroke="#1c3c70" stroke-width=".9" stroke-linejoin="round"/></svg>
<svg class="b" style="left:6px;top:713px;" width="5" height="7" viewBox="0 0 5 7"><path d="M4,0v6l-4,-3z" fill="#888"/></svg>
<div class="b" style="left:5px;top:728px;width:2px;height:2px;background:#b8b8b8;"></div>
<div class="b" style="left:9px;top:728px;width:2px;height:2px;background:#b8b8b8;"></div>
<div class="b" style="left:13px;top:728px;width:2px;height:2px;background:#b8b8b8;"></div>
<div class="b" style="left:17px;top:728px;width:2px;height:2px;background:#b8b8b8;"></div>
<svg class="b" style="left:4px;top:737px;" width="18" height="17" viewBox="0 0 18 17"><path d="M3,3l12,11" stroke="#222" stroke-width="1"/><path d="M1,6l5,-5M12,16l5,-5" stroke="#222" stroke-width="1.100"/><path d="M3,3l3.500,1.200-2.300,2.300zM15,14l-3.500,-1.200 2.300,-2.300z" fill="#222"/></svg>
<svg class="b" style="left:4px;top:759px;" width="18" height="17" viewBox="0 0 18 17"><path d="M1,1v9M17,1v9M1,5h16" stroke="#e81010" stroke-width="1.100"/><path d="M1,5l3,-2v4zM17,5l-3,-2v4z" fill="#e81010"/><ellipse cx="10" cy="12" rx="4.500" ry="3" fill="#1878e0" stroke="#f4f4f4" stroke-width="1"/><ellipse cx="10" cy="12" rx="2" ry="1.200" fill="#8cc8ff"/></svg>
<svg class="b" style="left:4px;top:781px;" width="18" height="18" viewBox="0 0 18 18"><path d="M1,1h8M1,17h8M5,1v16" stroke="#e81010" stroke-width="1.100"/><path d="M5,1l-2,3h4zM5,17l-2,-3h4z" fill="#e81010"/><ellipse cx="13" cy="9" rx="4" ry="3" fill="#1878e0" stroke="#f4f4f4" stroke-width="1"/><ellipse cx="13" cy="9" rx="1.800" ry="1.200" fill="#8cc8ff"/></svg>
<svg class="b" style="left:4px;top:804px;" width="18" height="16" viewBox="0 0 18 16"><path d="M1,15h16M1,15l10,-13" stroke="#222" stroke-width="1.100" fill="none"/><path d="M10.500,5.500a10,10 0 0 1 4,9" stroke="#222" stroke-width="1" fill="none"/><path d="M10,4.800l3,.6-2,1.800zM14.600,15l-1.500,-2.800 2.800,.3z" fill="#222"/></svg>
<svg class="b" style="left:4px;top:825px;" width="18" height="18" viewBox="0 0 18 18"><circle cx="9" cy="9" r="8" fill="#f4f4f4" stroke="#333" stroke-width="1.100"/><path d="M9,9l-4.500,-4.500" stroke="#222" stroke-width="1"/><path d="M4,4l3.200,.8-2.400,2.400z" fill="#222"/></svg>
<svg class="b" style="left:4px;top:847px;" width="18" height="18" viewBox="0 0 18 18"><circle cx="9" cy="9" r="8" fill="#f4f4f4" stroke="#333" stroke-width="1.100"/><path d="M4,4l10,10" stroke="#222" stroke-width="1"/><path d="M3.500,3.500l3.200,.8-2.400,2.400zM14.500,14.500l-3.200,-.8 2.400,-2.400z" fill="#222"/></svg>
<div class="b" style="left:2px;top:871px;width:22px;height:1px;background:#d0d0d0;"></div>
<svg class="b" style="left:4px;top:878px;" width="18" height="16" viewBox="0 0 18 16"><path d="M2,13v-5q0,-3 3,-3h3" stroke="#1a4a9a" stroke-width="1.500" fill="none"/><path d="M2,16l-2,-4h4z" fill="#1a4a9a"/></svg>
<span class="t" style="left:10.5px;top:878.5px;height:10px;line-height:10px;font-size:9px;letter-spacing:0.000px;color:#1a4a9a;font-weight:bold;">A</span>
<svg class="b" style="left:8px;top:899px;" width="10" height="18" viewBox="0 0 10 18"><defs><linearGradient id="pg" x1="0" x2="1"><stop offset="0" stop-color="#333"/><stop offset=".5" stop-color="#999"/><stop offset="1" stop-color="#444"/></linearGradient></defs><path d="M0,0h9M0,2.500h9M0,5h9" stroke="#222" stroke-width="1.300"/><rect x="0" y="7" width="9" height="10.500" fill="url(#pg)"/></svg>
<svg class="b" style="left:6px;top:920px;" width="5" height="7" viewBox="0 0 5 7"><path d="M4,0v6l-4,-3z" fill="#888"/></svg>
</body></html>
